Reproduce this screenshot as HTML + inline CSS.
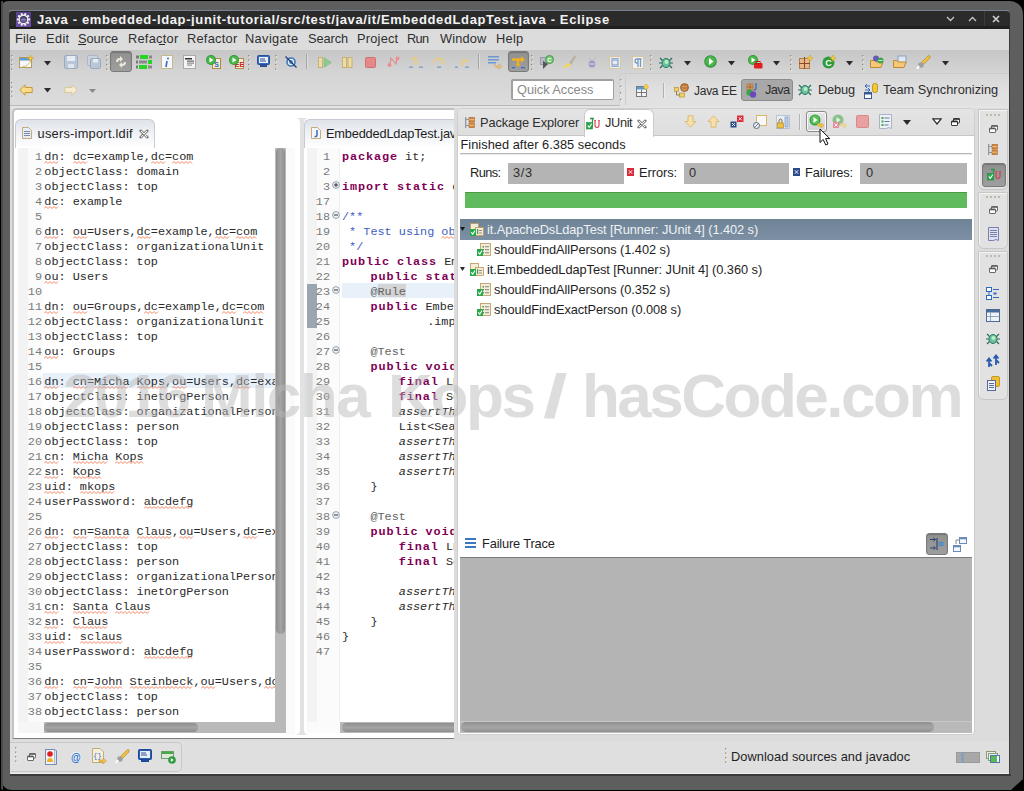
<!DOCTYPE html>
<html><head><meta charset="utf-8"><title>Eclipse</title>
<style>html,body{margin:0;padding:0;}
body{width:1024px;height:791px;overflow:hidden;position:relative;background:#000;font-family:"Liberation Sans",sans-serif;}
div,svg{position:absolute;box-sizing:border-box;}
.t{white-space:pre;}
.code{font-family:'Liberation Mono',monospace;font-size:11.83px;line-height:11.83px;}
</style></head>
<body>
<div style="left:1px;top:1px;width:1022px;height:789px;clip-path:polygon(0 0,100% 0,100% 778px,1010px 100%,0 100%);"><div style="left:0;top:0;width:1022px;height:789px;background:#5e5e5e;border-radius:7px 13px 0 11px;"></div></div>
<div style="left:1px;top:1px;width:2px;height:789px;background:#4a4a4a;border-radius:7px 0 0 12px;"></div>
<div style="left:9px;top:10px;width:1001px;height:19px;background:#2b2b2b;border-top:1px solid #6d747a;border-radius:4px 4px 0 0;"></div>
<div style="left:10px;top:29px;width:999px;height:745px;background:#dcdcdc;"></div>
<div style="left:10px;top:774px;width:1001px;height:2px;background:#3a3a3a;"></div>
<div style="left:1009px;top:29px;width:1px;height:747px;background:#3c3c3c;"></div>
<div class="t" id="t1" style="left:37px;top:13.20px;font-family:'Liberation Sans', sans-serif;font-size:13px;line-height:13px;color:#f2f2f2;font-weight:bold;font-style:normal;letter-spacing:0.630px;">Java - embedded-ldap-junit-tutorial/src/test/java/it/EmbeddedLdapTest.java - Eclipse</div>
<div style="left:10px;top:29px;width:999px;height:21px;background:#dcdcdc;"></div>
<div class="t" id="t2" style="left:15px;top:32.86px;font-family:'Liberation Sans', sans-serif;font-size:12.8px;line-height:12.8px;color:#2e2e2e;font-weight:normal;font-style:normal;letter-spacing:0.177px;">File</div>
<div class="t" id="t3" style="left:46px;top:32.86px;font-family:'Liberation Sans', sans-serif;font-size:12.8px;line-height:12.8px;color:#2e2e2e;font-weight:normal;font-style:normal;letter-spacing:0.367px;">Edit</div>
<div class="t" id="t4" style="left:78px;top:32.86px;font-family:'Liberation Sans', sans-serif;font-size:12.8px;line-height:12.8px;color:#2e2e2e;font-weight:normal;font-style:normal;letter-spacing:-0.079px;">Source</div>
<div class="t" id="t5" style="left:128px;top:32.86px;font-family:'Liberation Sans', sans-serif;font-size:12.8px;line-height:12.8px;color:#2e2e2e;font-weight:normal;font-style:normal;letter-spacing:0.256px;">Refactor</div>
<div class="t" id="t6" style="left:187px;top:32.86px;font-family:'Liberation Sans', sans-serif;font-size:12.8px;line-height:12.8px;color:#2e2e2e;font-weight:normal;font-style:normal;letter-spacing:0.256px;">Refactor</div>
<div class="t" id="t7" style="left:245px;top:32.86px;font-family:'Liberation Sans', sans-serif;font-size:12.8px;line-height:12.8px;color:#2e2e2e;font-weight:normal;font-style:normal;letter-spacing:0.378px;">Navigate</div>
<div class="t" id="t8" style="left:308px;top:32.86px;font-family:'Liberation Sans', sans-serif;font-size:12.8px;line-height:12.8px;color:#2e2e2e;font-weight:normal;font-style:normal;letter-spacing:-0.079px;">Search</div>
<div class="t" id="t9" style="left:357px;top:32.86px;font-family:'Liberation Sans', sans-serif;font-size:12.8px;line-height:12.8px;color:#2e2e2e;font-weight:normal;font-style:normal;letter-spacing:0.221px;">Project</div>
<div class="t" id="t10" style="left:407px;top:32.86px;font-family:'Liberation Sans', sans-serif;font-size:12.8px;line-height:12.8px;color:#2e2e2e;font-weight:normal;font-style:normal;letter-spacing:-0.662px;">Run</div>
<div class="t" id="t11" style="left:440px;top:32.86px;font-family:'Liberation Sans', sans-serif;font-size:12.8px;line-height:12.8px;color:#2e2e2e;font-weight:normal;font-style:normal;letter-spacing:0.128px;">Window</div>
<div class="t" id="t12" style="left:496px;top:32.86px;font-family:'Liberation Sans', sans-serif;font-size:12.8px;line-height:12.8px;color:#2e2e2e;font-weight:normal;font-style:normal;letter-spacing:0.278px;">Help</div>
<div style="left:10px;top:50px;width:999px;height:55px;background:linear-gradient(#c6c6c6,#d4d4d4 40%,#dcdcdc);"></div>
<div style="left:10px;top:105px;width:609px;height:1px;background:#b9b9b9;"></div>
<div style="left:10px;top:106px;width:999px;height:3px;background:linear-gradient(#e2e2e2,#e6e6e6 60%,#d4d4d4);"></div>
<div style="left:511px;top:79px;width:103px;height:21px;background:#fff;border:1px solid #a0a0a0;border-left-width:2px;border-top-width:2px;border-radius:2px;"></div>
<div class="t" id="t13" style="left:517px;top:83.86px;font-family:'Liberation Sans', sans-serif;font-size:12.8px;line-height:12.8px;color:#8a8a8a;font-weight:normal;font-style:normal;letter-spacing:-0.033px;">Quick Access</div>
<div style="left:619px;top:73px;width:390px;height:33px;background:linear-gradient(#d6d6d6,#e0e0e0 50%,#e2e2e2);border-left:1px solid #d0d0d0;border-top:1px solid #cccccc;border-radius:5px 0 0 0;"></div>
<div style="left:625px;top:76px;width:1px;height:29px;background:#cdcdcd;"></div>
<div style="left:741px;top:79px;width:52px;height:22px;background:#a8a8a8;border:1px solid #8c8c8c;border-radius:3px;"></div>
<div class="t" id="t14" style="left:694px;top:84.54px;font-family:'Liberation Sans', sans-serif;font-size:12px;line-height:12px;color:#2e2e2e;font-weight:normal;font-style:normal;letter-spacing:-0.268px;">Java EE</div>
<div class="t" id="t15" style="left:765px;top:83.86px;font-family:'Liberation Sans', sans-serif;font-size:12.8px;line-height:12.8px;color:#2e2e2e;font-weight:normal;font-style:normal;letter-spacing:-0.626px;">Java</div>
<div class="t" id="t16" style="left:818px;top:83.86px;font-family:'Liberation Sans', sans-serif;font-size:12.8px;line-height:12.8px;color:#2e2e2e;font-weight:normal;font-style:normal;letter-spacing:-0.139px;">Debug</div>
<div class="t" id="t17" style="left:883px;top:83.86px;font-family:'Liberation Sans', sans-serif;font-size:12.8px;line-height:12.8px;color:#2e2e2e;font-weight:normal;font-style:normal;letter-spacing:-0.004px;">Team Synchronizing</div>
<div style="left:10px;top:108px;width:999px;height:633px;background:#dcdcdc;"></div>
<div style="left:12px;top:108px;width:443px;height:631px;background:#fff;border:2px solid #c2c2c2;border-right:none;border-bottom:1px solid #7e7e7e;border-radius:5px 0 0 0;"></div>
<div style="left:14px;top:737px;width:441px;height:1px;background:#fff;"></div>
<div style="left:10px;top:739px;width:446px;height:3px;background:#dcdcdc;"></div>
<svg style="position:absolute;left:294px;top:118px;" width="16" height="620" viewBox="0 0 16 620"><path d="M2 0 Q6 0 6 6 L6 612 Q6 616 2 617 L14 617 Q10 616 10 612 L10 6 Q10 0 14 0 Z" fill="#e2e2e2"/></svg>
<div style="left:286px;top:148px;width:9px;height:587px;background:#fafafa;"></div>
<div style="left:454px;top:108px;width:4px;height:633px;background:#dcdcdc;"></div>
<div style="left:457px;top:108px;width:518px;height:627px;background:#fff;border:1px solid #cdcdcd;border-radius:6px 6px 4px 4px;"></div>
<div style="left:458px;top:109px;width:516px;height:27px;background:linear-gradient(#e4e4e4,#dedede);border-radius:5px 5px 0 0;border-bottom:1px solid #c6c6c6;"></div>
<div style="left:584px;top:109px;width:70px;height:28px;background:#fff;border:1px solid #cacaca;border-bottom:none;border-radius:6px 6px 0 0;"></div>
<div class="t" id="t18" style="left:480px;top:116.86px;font-family:'Liberation Sans', sans-serif;font-size:12.8px;line-height:12.8px;color:#2e2e2e;font-weight:normal;font-style:normal;letter-spacing:-0.124px;">Package Explorer</div>
<div class="t" id="t19" style="left:605px;top:116.86px;font-family:'Liberation Sans', sans-serif;font-size:12.8px;line-height:12.8px;color:#2e2e2e;font-weight:normal;font-style:normal;letter-spacing:-0.376px;">JUnit</div>
<div class="t" id="t20" style="left:460.5px;top:138.86px;font-family:'Liberation Sans', sans-serif;font-size:12.8px;line-height:12.8px;color:#1e1e1e;font-weight:normal;font-style:normal;letter-spacing:0.030px;">Finished after 6.385 seconds</div>
<div style="left:460px;top:153px;width:512px;height:1px;background:#b4b4b4;"></div>
<div style="left:460px;top:154px;width:512px;height:1px;background:#ececec;"></div>
<div class="t" id="t21" style="left:470px;top:166.86px;font-family:'Liberation Sans', sans-serif;font-size:12.8px;line-height:12.8px;color:#1e1e1e;font-weight:normal;font-style:normal;letter-spacing:-0.569px;">Runs:</div>
<div style="left:508px;top:163px;width:116px;height:21px;background:#b4b4b4;"></div>
<div class="t" id="t22" style="left:513px;top:166.86px;font-family:'Liberation Sans', sans-serif;font-size:12.8px;line-height:12.8px;color:#2e2e2e;font-weight:normal;font-style:normal;letter-spacing:0.681px;">3/3</div>
<div class="t" id="t23" style="left:639px;top:166.86px;font-family:'Liberation Sans', sans-serif;font-size:12.8px;line-height:12.8px;color:#1e1e1e;font-weight:normal;font-style:normal;letter-spacing:-0.040px;">Errors:</div>
<div style="left:684px;top:163px;width:105px;height:21px;background:#b4b4b4;"></div>
<div class="t" id="t24" style="left:689px;top:166.86px;font-family:'Liberation Sans', sans-serif;font-size:12.8px;line-height:12.8px;color:#2e2e2e;font-weight:normal;font-style:normal;">0</div>
<div class="t" id="t25" style="left:805px;top:166.86px;font-family:'Liberation Sans', sans-serif;font-size:12.8px;line-height:12.8px;color:#1e1e1e;font-weight:normal;font-style:normal;letter-spacing:-0.115px;">Failures:</div>
<div style="left:860px;top:163px;width:107px;height:21px;background:#b4b4b4;"></div>
<div class="t" id="t26" style="left:866px;top:166.86px;font-family:'Liberation Sans', sans-serif;font-size:12.8px;line-height:12.8px;color:#2e2e2e;font-weight:normal;font-style:normal;">0</div>
<div style="left:465px;top:192px;width:502px;height:16px;background:#5fbb5d;border-top:1px solid #4a9a48;"></div>
<div style="left:460px;top:219px;width:512px;height:21px;background:linear-gradient(#6f8396,#7d90a3);"></div>
<div class="t" id="t27" style="left:487px;top:223.86px;font-family:'Liberation Sans', sans-serif;font-size:12.8px;line-height:12.8px;color:#eef2f6;font-weight:normal;font-style:normal;letter-spacing:-0.074px;">it.ApacheDsLdapTest [Runner: JUnit 4] (1.402 s)</div>
<div class="t" id="t28" style="left:494px;top:243.86px;font-family:'Liberation Sans', sans-serif;font-size:12.8px;line-height:12.8px;color:#1e1e1e;font-weight:normal;font-style:normal;letter-spacing:-0.058px;">shouldFindAllPersons (1.402 s)</div>
<div class="t" id="t29" style="left:487px;top:263.86px;font-family:'Liberation Sans', sans-serif;font-size:12.8px;line-height:12.8px;color:#1e1e1e;font-weight:normal;font-style:normal;letter-spacing:-0.049px;">it.EmbeddedLdapTest [Runner: JUnit 4] (0.360 s)</div>
<div class="t" id="t30" style="left:494px;top:283.86px;font-family:'Liberation Sans', sans-serif;font-size:12.8px;line-height:12.8px;color:#1e1e1e;font-weight:normal;font-style:normal;letter-spacing:-0.058px;">shouldFindAllPersons (0.352 s)</div>
<div class="t" id="t31" style="left:494px;top:303.86px;font-family:'Liberation Sans', sans-serif;font-size:12.8px;line-height:12.8px;color:#1e1e1e;font-weight:normal;font-style:normal;letter-spacing:-0.069px;">shouldFindExactPerson (0.008 s)</div>
<div class="t" id="t32" style="left:482px;top:537.86px;font-family:'Liberation Sans', sans-serif;font-size:12.8px;line-height:12.8px;color:#1e1e1e;font-weight:normal;font-style:normal;letter-spacing:-0.146px;">Failure Trace</div>
<div style="left:460px;top:557px;width:512px;height:176px;background:#b4b4b4;border-top:1px solid #7a7a7a;"></div>
<div style="left:978px;top:109px;width:30px;height:81px;background:#e2e2e2;border:1px solid #c6c6c6;border-radius:1px 1px 6px 6px;box-shadow:inset 1px 1px 0 #f4f4f4;"></div>
<div style="left:978px;top:192px;width:30px;height:57px;background:#e2e2e2;border:1px solid #c6c6c6;border-radius:1px 1px 6px 6px;box-shadow:inset 1px 1px 0 #f4f4f4;"></div>
<div style="left:978px;top:251px;width:30px;height:149px;background:#e2e2e2;border:1px solid #c6c6c6;border-radius:1px 1px 6px 6px;box-shadow:inset 1px 1px 0 #f4f4f4;"></div>
<div style="left:10px;top:741px;width:999px;height:32px;background:#dfdfdf;"></div>
<div style="left:10px;top:773px;width:999px;height:1px;background:#efefef;"></div>
<div style="left:10px;top:742px;width:172px;height:30px;background:#e0e0e0;border:1px solid #c8c8c8;border-left:none;border-radius:0 5px 5px 0;"></div>
<div class="t" id="t33" style="left:731px;top:750.86px;font-family:'Liberation Sans', sans-serif;font-size:12.8px;line-height:12.8px;color:#1e1e1e;font-weight:normal;font-style:normal;letter-spacing:0.048px;">Download sources and javadoc</div>
<div style="left:15px;top:119px;width:140px;height:29px;background:linear-gradient(#dfe3ea,#f4f5f8 60%,#fff);border:1px solid #c6cbd3;border-bottom:none;border-radius:6px 6px 0 0;"></div>
<div class="t" id="t34" style="left:37.5px;top:127.86px;font-family:'Liberation Sans', sans-serif;font-size:12.8px;line-height:12.8px;color:#1e1e1e;font-weight:normal;font-style:normal;letter-spacing:0.258px;">users-import.ldif</div>
<div style="left:18px;top:148px;width:10px;height:574px;background:#f3f3f3;"></div>
<div style="left:28px;top:148px;width:15px;height:574px;background:#fbfbfb;"></div>
<div style="left:43px;top:148px;width:232px;height:575px;overflow:hidden;">
<div style="left:0px;top:225px;width:232px;height:15px;background:#e8f0fa;"></div>
<div class="t code" style="left:1.35px;top:3.84px;"><span style="color:#2a2a2a;">dn: dc=example,dc=com</span></div>
<svg style="position:absolute;left:1.35px;top:12.5px;" width="15" height="4" viewBox="0 0 15 4"><path d="M0 2.5 l2 -2 l2 2 l2 -2 l2 2 l2 -2 l2 2 l2 -2" fill="none" stroke="#f4683c" stroke-width="0.8"/></svg>
<svg style="position:absolute;left:29.75px;top:12.5px;" width="15" height="4" viewBox="0 0 15 4"><path d="M0 2.5 l2 -2 l2 2 l2 -2 l2 2 l2 -2 l2 2 l2 -2" fill="none" stroke="#f4683c" stroke-width="0.8"/></svg>
<svg style="position:absolute;left:107.85px;top:12.5px;" width="15" height="4" viewBox="0 0 15 4"><path d="M0 2.5 l2 -2 l2 2 l2 -2 l2 2 l2 -2 l2 2 l2 -2" fill="none" stroke="#f4683c" stroke-width="0.8"/></svg>
<svg style="position:absolute;left:129.15px;top:12.5px;" width="21" height="4" viewBox="0 0 21 4"><path d="M0 2.5 l2 -2 l2 2 l2 -2 l2 2 l2 -2 l2 2 l2 -2 l2 2 l2 -2 l2 2" fill="none" stroke="#f4683c" stroke-width="0.8"/></svg>
<div class="t code" style="left:1.35px;top:18.84px;"><span style="color:#2a2a2a;">objectClass: domain</span></div>
<div class="t code" style="left:1.35px;top:33.84px;"><span style="color:#2a2a2a;">objectClass: top</span></div>
<div class="t code" style="left:1.35px;top:48.84px;"><span style="color:#2a2a2a;">dc: example</span></div>
<svg style="position:absolute;left:1.35px;top:57.5px;" width="15" height="4" viewBox="0 0 15 4"><path d="M0 2.5 l2 -2 l2 2 l2 -2 l2 2 l2 -2 l2 2 l2 -2" fill="none" stroke="#f4683c" stroke-width="0.8"/></svg>
<div class="t code" style="left:1.35px;top:63.84px;"><span style="color:#2a2a2a;"></span></div>
<div class="t code" style="left:1.35px;top:78.84px;"><span style="color:#2a2a2a;">dn: ou=Users,dc=example,dc=com</span></div>
<svg style="position:absolute;left:1.35px;top:87.5px;" width="15" height="4" viewBox="0 0 15 4"><path d="M0 2.5 l2 -2 l2 2 l2 -2 l2 2 l2 -2 l2 2 l2 -2" fill="none" stroke="#f4683c" stroke-width="0.8"/></svg>
<svg style="position:absolute;left:29.75px;top:87.5px;" width="15" height="4" viewBox="0 0 15 4"><path d="M0 2.5 l2 -2 l2 2 l2 -2 l2 2 l2 -2 l2 2 l2 -2" fill="none" stroke="#f4683c" stroke-width="0.8"/></svg>
<svg style="position:absolute;left:93.64999999999999px;top:87.5px;" width="15" height="4" viewBox="0 0 15 4"><path d="M0 2.5 l2 -2 l2 2 l2 -2 l2 2 l2 -2 l2 2 l2 -2" fill="none" stroke="#f4683c" stroke-width="0.8"/></svg>
<svg style="position:absolute;left:171.74999999999997px;top:87.5px;" width="15" height="4" viewBox="0 0 15 4"><path d="M0 2.5 l2 -2 l2 2 l2 -2 l2 2 l2 -2 l2 2 l2 -2" fill="none" stroke="#f4683c" stroke-width="0.8"/></svg>
<svg style="position:absolute;left:193.04999999999998px;top:87.5px;" width="21" height="4" viewBox="0 0 21 4"><path d="M0 2.5 l2 -2 l2 2 l2 -2 l2 2 l2 -2 l2 2 l2 -2 l2 2 l2 -2 l2 2" fill="none" stroke="#f4683c" stroke-width="0.8"/></svg>
<div class="t code" style="left:1.35px;top:93.84px;"><span style="color:#2a2a2a;">objectClass: organizationalUnit</span></div>
<div class="t code" style="left:1.35px;top:108.84px;"><span style="color:#2a2a2a;">objectClass: top</span></div>
<div class="t code" style="left:1.35px;top:123.84px;"><span style="color:#2a2a2a;">ou: Users</span></div>
<svg style="position:absolute;left:1.35px;top:132.5px;" width="15" height="4" viewBox="0 0 15 4"><path d="M0 2.5 l2 -2 l2 2 l2 -2 l2 2 l2 -2 l2 2 l2 -2" fill="none" stroke="#f4683c" stroke-width="0.8"/></svg>
<div class="t code" style="left:1.35px;top:138.84px;"><span style="color:#2a2a2a;"></span></div>
<div class="t code" style="left:1.35px;top:153.84px;"><span style="color:#2a2a2a;">dn: ou=Groups,dc=example,dc=com</span></div>
<svg style="position:absolute;left:1.35px;top:162.5px;" width="15" height="4" viewBox="0 0 15 4"><path d="M0 2.5 l2 -2 l2 2 l2 -2 l2 2 l2 -2 l2 2 l2 -2" fill="none" stroke="#f4683c" stroke-width="0.8"/></svg>
<svg style="position:absolute;left:29.75px;top:162.5px;" width="15" height="4" viewBox="0 0 15 4"><path d="M0 2.5 l2 -2 l2 2 l2 -2 l2 2 l2 -2 l2 2 l2 -2" fill="none" stroke="#f4683c" stroke-width="0.8"/></svg>
<svg style="position:absolute;left:100.74999999999999px;top:162.5px;" width="15" height="4" viewBox="0 0 15 4"><path d="M0 2.5 l2 -2 l2 2 l2 -2 l2 2 l2 -2 l2 2 l2 -2" fill="none" stroke="#f4683c" stroke-width="0.8"/></svg>
<svg style="position:absolute;left:178.85px;top:162.5px;" width="15" height="4" viewBox="0 0 15 4"><path d="M0 2.5 l2 -2 l2 2 l2 -2 l2 2 l2 -2 l2 2 l2 -2" fill="none" stroke="#f4683c" stroke-width="0.8"/></svg>
<svg style="position:absolute;left:200.14999999999998px;top:162.5px;" width="21" height="4" viewBox="0 0 21 4"><path d="M0 2.5 l2 -2 l2 2 l2 -2 l2 2 l2 -2 l2 2 l2 -2 l2 2 l2 -2 l2 2" fill="none" stroke="#f4683c" stroke-width="0.8"/></svg>
<div class="t code" style="left:1.35px;top:168.84px;"><span style="color:#2a2a2a;">objectClass: organizationalUnit</span></div>
<div class="t code" style="left:1.35px;top:183.84px;"><span style="color:#2a2a2a;">objectClass: top</span></div>
<div class="t code" style="left:1.35px;top:198.84px;"><span style="color:#2a2a2a;">ou: Groups</span></div>
<svg style="position:absolute;left:1.35px;top:207.5px;" width="15" height="4" viewBox="0 0 15 4"><path d="M0 2.5 l2 -2 l2 2 l2 -2 l2 2 l2 -2 l2 2 l2 -2" fill="none" stroke="#f4683c" stroke-width="0.8"/></svg>
<div class="t code" style="left:1.35px;top:213.84px;"><span style="color:#2a2a2a;"></span></div>
<div class="t code" style="left:1.35px;top:228.84px;"><span style="color:#2a2a2a;">dn: cn=Micha Kops,ou=Users,dc=example,dc=com</span></div>
<svg style="position:absolute;left:1.35px;top:237.5px;" width="15" height="4" viewBox="0 0 15 4"><path d="M0 2.5 l2 -2 l2 2 l2 -2 l2 2 l2 -2 l2 2 l2 -2" fill="none" stroke="#f4683c" stroke-width="0.8"/></svg>
<svg style="position:absolute;left:29.75px;top:237.5px;" width="15" height="4" viewBox="0 0 15 4"><path d="M0 2.5 l2 -2 l2 2 l2 -2 l2 2 l2 -2 l2 2 l2 -2" fill="none" stroke="#f4683c" stroke-width="0.8"/></svg>
<svg style="position:absolute;left:51.05px;top:237.5px;" width="35" height="4" viewBox="0 0 35 4"><path d="M0 2.5 l2 -2 l2 2 l2 -2 l2 2 l2 -2 l2 2 l2 -2 l2 2 l2 -2 l2 2 l2 -2 l2 2 l2 -2 l2 2 l2 -2 l2 2 l2 -2" fill="none" stroke="#f4683c" stroke-width="0.8"/></svg>
<svg style="position:absolute;left:93.64999999999999px;top:237.5px;" width="29" height="4" viewBox="0 0 29 4"><path d="M0 2.5 l2 -2 l2 2 l2 -2 l2 2 l2 -2 l2 2 l2 -2 l2 2 l2 -2 l2 2 l2 -2 l2 2 l2 -2 l2 2" fill="none" stroke="#f4683c" stroke-width="0.8"/></svg>
<svg style="position:absolute;left:129.15px;top:237.5px;" width="15" height="4" viewBox="0 0 15 4"><path d="M0 2.5 l2 -2 l2 2 l2 -2 l2 2 l2 -2 l2 2 l2 -2" fill="none" stroke="#f4683c" stroke-width="0.8"/></svg>
<svg style="position:absolute;left:193.04999999999998px;top:237.5px;" width="15" height="4" viewBox="0 0 15 4"><path d="M0 2.5 l2 -2 l2 2 l2 -2 l2 2 l2 -2 l2 2 l2 -2" fill="none" stroke="#f4683c" stroke-width="0.8"/></svg>
<svg style="position:absolute;left:271.15000000000003px;top:237.5px;" width="15" height="4" viewBox="0 0 15 4"><path d="M0 2.5 l2 -2 l2 2 l2 -2 l2 2 l2 -2 l2 2 l2 -2" fill="none" stroke="#f4683c" stroke-width="0.8"/></svg>
<svg style="position:absolute;left:292.45px;top:237.5px;" width="21" height="4" viewBox="0 0 21 4"><path d="M0 2.5 l2 -2 l2 2 l2 -2 l2 2 l2 -2 l2 2 l2 -2 l2 2 l2 -2 l2 2" fill="none" stroke="#f4683c" stroke-width="0.8"/></svg>
<div class="t code" style="left:1.35px;top:243.84px;"><span style="color:#2a2a2a;">objectClass: inetOrgPerson</span></div>
<div class="t code" style="left:1.35px;top:258.84px;"><span style="color:#2a2a2a;">objectClass: organizationalPerson</span></div>
<div class="t code" style="left:1.35px;top:273.84px;"><span style="color:#2a2a2a;">objectClass: person</span></div>
<div class="t code" style="left:1.35px;top:288.84px;"><span style="color:#2a2a2a;">objectClass: top</span></div>
<div class="t code" style="left:1.35px;top:303.84px;"><span style="color:#2a2a2a;">cn: Micha Kops</span></div>
<svg style="position:absolute;left:1.35px;top:312.5px;" width="15" height="4" viewBox="0 0 15 4"><path d="M0 2.5 l2 -2 l2 2 l2 -2 l2 2 l2 -2 l2 2 l2 -2" fill="none" stroke="#f4683c" stroke-width="0.8"/></svg>
<svg style="position:absolute;left:29.75px;top:312.5px;" width="35" height="4" viewBox="0 0 35 4"><path d="M0 2.5 l2 -2 l2 2 l2 -2 l2 2 l2 -2 l2 2 l2 -2 l2 2 l2 -2 l2 2 l2 -2 l2 2 l2 -2 l2 2 l2 -2 l2 2 l2 -2" fill="none" stroke="#f4683c" stroke-width="0.8"/></svg>
<svg style="position:absolute;left:72.35px;top:312.5px;" width="29" height="4" viewBox="0 0 29 4"><path d="M0 2.5 l2 -2 l2 2 l2 -2 l2 2 l2 -2 l2 2 l2 -2 l2 2 l2 -2 l2 2 l2 -2 l2 2 l2 -2 l2 2" fill="none" stroke="#f4683c" stroke-width="0.8"/></svg>
<div class="t code" style="left:1.35px;top:318.84px;"><span style="color:#2a2a2a;">sn: Kops</span></div>
<svg style="position:absolute;left:1.35px;top:327.5px;" width="15" height="4" viewBox="0 0 15 4"><path d="M0 2.5 l2 -2 l2 2 l2 -2 l2 2 l2 -2 l2 2 l2 -2" fill="none" stroke="#f4683c" stroke-width="0.8"/></svg>
<svg style="position:absolute;left:29.75px;top:327.5px;" width="29" height="4" viewBox="0 0 29 4"><path d="M0 2.5 l2 -2 l2 2 l2 -2 l2 2 l2 -2 l2 2 l2 -2 l2 2 l2 -2 l2 2 l2 -2 l2 2 l2 -2 l2 2" fill="none" stroke="#f4683c" stroke-width="0.8"/></svg>
<div class="t code" style="left:1.35px;top:333.84px;"><span style="color:#2a2a2a;">uid: mkops</span></div>
<svg style="position:absolute;left:1.35px;top:342.5px;" width="21" height="4" viewBox="0 0 21 4"><path d="M0 2.5 l2 -2 l2 2 l2 -2 l2 2 l2 -2 l2 2 l2 -2 l2 2 l2 -2 l2 2" fill="none" stroke="#f4683c" stroke-width="0.8"/></svg>
<svg style="position:absolute;left:36.85px;top:342.5px;" width="35" height="4" viewBox="0 0 35 4"><path d="M0 2.5 l2 -2 l2 2 l2 -2 l2 2 l2 -2 l2 2 l2 -2 l2 2 l2 -2 l2 2 l2 -2 l2 2 l2 -2 l2 2 l2 -2 l2 2 l2 -2" fill="none" stroke="#f4683c" stroke-width="0.8"/></svg>
<div class="t code" style="left:1.35px;top:348.84px;"><span style="color:#2a2a2a;">userPassword: abcdefg</span></div>
<svg style="position:absolute;left:100.74999999999999px;top:357.5px;" width="49" height="4" viewBox="0 0 49 4"><path d="M0 2.5 l2 -2 l2 2 l2 -2 l2 2 l2 -2 l2 2 l2 -2 l2 2 l2 -2 l2 2 l2 -2 l2 2 l2 -2 l2 2 l2 -2 l2 2 l2 -2 l2 2 l2 -2 l2 2 l2 -2 l2 2 l2 -2 l2 2" fill="none" stroke="#f4683c" stroke-width="0.8"/></svg>
<div class="t code" style="left:1.35px;top:363.84px;"><span style="color:#2a2a2a;"></span></div>
<div class="t code" style="left:1.35px;top:378.84px;"><span style="color:#2a2a2a;">dn: cn=Santa Claus,ou=Users,dc=example,dc=com</span></div>
<svg style="position:absolute;left:1.35px;top:387.5px;" width="15" height="4" viewBox="0 0 15 4"><path d="M0 2.5 l2 -2 l2 2 l2 -2 l2 2 l2 -2 l2 2 l2 -2" fill="none" stroke="#f4683c" stroke-width="0.8"/></svg>
<svg style="position:absolute;left:29.75px;top:387.5px;" width="15" height="4" viewBox="0 0 15 4"><path d="M0 2.5 l2 -2 l2 2 l2 -2 l2 2 l2 -2 l2 2 l2 -2" fill="none" stroke="#f4683c" stroke-width="0.8"/></svg>
<svg style="position:absolute;left:51.05px;top:387.5px;" width="35" height="4" viewBox="0 0 35 4"><path d="M0 2.5 l2 -2 l2 2 l2 -2 l2 2 l2 -2 l2 2 l2 -2 l2 2 l2 -2 l2 2 l2 -2 l2 2 l2 -2 l2 2 l2 -2 l2 2 l2 -2" fill="none" stroke="#f4683c" stroke-width="0.8"/></svg>
<svg style="position:absolute;left:93.64999999999999px;top:387.5px;" width="35" height="4" viewBox="0 0 35 4"><path d="M0 2.5 l2 -2 l2 2 l2 -2 l2 2 l2 -2 l2 2 l2 -2 l2 2 l2 -2 l2 2 l2 -2 l2 2 l2 -2 l2 2 l2 -2 l2 2 l2 -2" fill="none" stroke="#f4683c" stroke-width="0.8"/></svg>
<svg style="position:absolute;left:136.25px;top:387.5px;" width="15" height="4" viewBox="0 0 15 4"><path d="M0 2.5 l2 -2 l2 2 l2 -2 l2 2 l2 -2 l2 2 l2 -2" fill="none" stroke="#f4683c" stroke-width="0.8"/></svg>
<svg style="position:absolute;left:200.14999999999998px;top:387.5px;" width="15" height="4" viewBox="0 0 15 4"><path d="M0 2.5 l2 -2 l2 2 l2 -2 l2 2 l2 -2 l2 2 l2 -2" fill="none" stroke="#f4683c" stroke-width="0.8"/></svg>
<svg style="position:absolute;left:278.25px;top:387.5px;" width="15" height="4" viewBox="0 0 15 4"><path d="M0 2.5 l2 -2 l2 2 l2 -2 l2 2 l2 -2 l2 2 l2 -2" fill="none" stroke="#f4683c" stroke-width="0.8"/></svg>
<svg style="position:absolute;left:299.55px;top:387.5px;" width="21" height="4" viewBox="0 0 21 4"><path d="M0 2.5 l2 -2 l2 2 l2 -2 l2 2 l2 -2 l2 2 l2 -2 l2 2 l2 -2 l2 2" fill="none" stroke="#f4683c" stroke-width="0.8"/></svg>
<div class="t code" style="left:1.35px;top:393.84px;"><span style="color:#2a2a2a;">objectClass: top</span></div>
<div class="t code" style="left:1.35px;top:408.84px;"><span style="color:#2a2a2a;">objectClass: person</span></div>
<div class="t code" style="left:1.35px;top:423.84px;"><span style="color:#2a2a2a;">objectClass: organizationalPerson</span></div>
<div class="t code" style="left:1.35px;top:438.84px;"><span style="color:#2a2a2a;">objectClass: inetOrgPerson</span></div>
<div class="t code" style="left:1.35px;top:453.84px;"><span style="color:#2a2a2a;">cn: Santa Claus</span></div>
<svg style="position:absolute;left:1.35px;top:462.5px;" width="15" height="4" viewBox="0 0 15 4"><path d="M0 2.5 l2 -2 l2 2 l2 -2 l2 2 l2 -2 l2 2 l2 -2" fill="none" stroke="#f4683c" stroke-width="0.8"/></svg>
<svg style="position:absolute;left:29.75px;top:462.5px;" width="35" height="4" viewBox="0 0 35 4"><path d="M0 2.5 l2 -2 l2 2 l2 -2 l2 2 l2 -2 l2 2 l2 -2 l2 2 l2 -2 l2 2 l2 -2 l2 2 l2 -2 l2 2 l2 -2 l2 2 l2 -2" fill="none" stroke="#f4683c" stroke-width="0.8"/></svg>
<svg style="position:absolute;left:72.35px;top:462.5px;" width="35" height="4" viewBox="0 0 35 4"><path d="M0 2.5 l2 -2 l2 2 l2 -2 l2 2 l2 -2 l2 2 l2 -2 l2 2 l2 -2 l2 2 l2 -2 l2 2 l2 -2 l2 2 l2 -2 l2 2 l2 -2" fill="none" stroke="#f4683c" stroke-width="0.8"/></svg>
<div class="t code" style="left:1.35px;top:468.84px;"><span style="color:#2a2a2a;">sn: Claus</span></div>
<svg style="position:absolute;left:1.35px;top:477.5px;" width="15" height="4" viewBox="0 0 15 4"><path d="M0 2.5 l2 -2 l2 2 l2 -2 l2 2 l2 -2 l2 2 l2 -2" fill="none" stroke="#f4683c" stroke-width="0.8"/></svg>
<svg style="position:absolute;left:29.75px;top:477.5px;" width="35" height="4" viewBox="0 0 35 4"><path d="M0 2.5 l2 -2 l2 2 l2 -2 l2 2 l2 -2 l2 2 l2 -2 l2 2 l2 -2 l2 2 l2 -2 l2 2 l2 -2 l2 2 l2 -2 l2 2 l2 -2" fill="none" stroke="#f4683c" stroke-width="0.8"/></svg>
<div class="t code" style="left:1.35px;top:483.84px;"><span style="color:#2a2a2a;">uid: sclaus</span></div>
<svg style="position:absolute;left:1.35px;top:492.5px;" width="21" height="4" viewBox="0 0 21 4"><path d="M0 2.5 l2 -2 l2 2 l2 -2 l2 2 l2 -2 l2 2 l2 -2 l2 2 l2 -2 l2 2" fill="none" stroke="#f4683c" stroke-width="0.8"/></svg>
<svg style="position:absolute;left:36.85px;top:492.5px;" width="43" height="4" viewBox="0 0 43 4"><path d="M0 2.5 l2 -2 l2 2 l2 -2 l2 2 l2 -2 l2 2 l2 -2 l2 2 l2 -2 l2 2 l2 -2 l2 2 l2 -2 l2 2 l2 -2 l2 2 l2 -2 l2 2 l2 -2 l2 2 l2 -2" fill="none" stroke="#f4683c" stroke-width="0.8"/></svg>
<div class="t code" style="left:1.35px;top:498.84px;"><span style="color:#2a2a2a;">userPassword: abcdefg</span></div>
<svg style="position:absolute;left:100.74999999999999px;top:507.5px;" width="49" height="4" viewBox="0 0 49 4"><path d="M0 2.5 l2 -2 l2 2 l2 -2 l2 2 l2 -2 l2 2 l2 -2 l2 2 l2 -2 l2 2 l2 -2 l2 2 l2 -2 l2 2 l2 -2 l2 2 l2 -2 l2 2 l2 -2 l2 2 l2 -2 l2 2 l2 -2 l2 2" fill="none" stroke="#f4683c" stroke-width="0.8"/></svg>
<div class="t code" style="left:1.35px;top:513.84px;"><span style="color:#2a2a2a;"></span></div>
<div class="t code" style="left:1.35px;top:528.84px;"><span style="color:#2a2a2a;">dn: cn=John Steinbeck,ou=Users,dc=example,dc=com</span></div>
<svg style="position:absolute;left:1.35px;top:537.5px;" width="15" height="4" viewBox="0 0 15 4"><path d="M0 2.5 l2 -2 l2 2 l2 -2 l2 2 l2 -2 l2 2 l2 -2" fill="none" stroke="#f4683c" stroke-width="0.8"/></svg>
<svg style="position:absolute;left:29.75px;top:537.5px;" width="15" height="4" viewBox="0 0 15 4"><path d="M0 2.5 l2 -2 l2 2 l2 -2 l2 2 l2 -2 l2 2 l2 -2" fill="none" stroke="#f4683c" stroke-width="0.8"/></svg>
<svg style="position:absolute;left:51.05px;top:537.5px;" width="29" height="4" viewBox="0 0 29 4"><path d="M0 2.5 l2 -2 l2 2 l2 -2 l2 2 l2 -2 l2 2 l2 -2 l2 2 l2 -2 l2 2 l2 -2 l2 2 l2 -2 l2 2" fill="none" stroke="#f4683c" stroke-width="0.8"/></svg>
<svg style="position:absolute;left:86.54999999999998px;top:537.5px;" width="63" height="4" viewBox="0 0 63 4"><path d="M0 2.5 l2 -2 l2 2 l2 -2 l2 2 l2 -2 l2 2 l2 -2 l2 2 l2 -2 l2 2 l2 -2 l2 2 l2 -2 l2 2 l2 -2 l2 2 l2 -2 l2 2 l2 -2 l2 2 l2 -2 l2 2 l2 -2 l2 2 l2 -2 l2 2 l2 -2 l2 2 l2 -2 l2 2 l2 -2" fill="none" stroke="#f4683c" stroke-width="0.8"/></svg>
<svg style="position:absolute;left:157.54999999999998px;top:537.5px;" width="15" height="4" viewBox="0 0 15 4"><path d="M0 2.5 l2 -2 l2 2 l2 -2 l2 2 l2 -2 l2 2 l2 -2" fill="none" stroke="#f4683c" stroke-width="0.8"/></svg>
<svg style="position:absolute;left:221.45px;top:537.5px;" width="15" height="4" viewBox="0 0 15 4"><path d="M0 2.5 l2 -2 l2 2 l2 -2 l2 2 l2 -2 l2 2 l2 -2" fill="none" stroke="#f4683c" stroke-width="0.8"/></svg>
<svg style="position:absolute;left:299.55px;top:537.5px;" width="15" height="4" viewBox="0 0 15 4"><path d="M0 2.5 l2 -2 l2 2 l2 -2 l2 2 l2 -2 l2 2 l2 -2" fill="none" stroke="#f4683c" stroke-width="0.8"/></svg>
<svg style="position:absolute;left:320.85px;top:537.5px;" width="21" height="4" viewBox="0 0 21 4"><path d="M0 2.5 l2 -2 l2 2 l2 -2 l2 2 l2 -2 l2 2 l2 -2 l2 2 l2 -2 l2 2" fill="none" stroke="#f4683c" stroke-width="0.8"/></svg>
<div class="t code" style="left:1.35px;top:543.84px;"><span style="color:#2a2a2a;">objectClass: top</span></div>
<div class="t code" style="left:1.35px;top:558.84px;"><span style="color:#2a2a2a;">objectClass: person</span></div>
<div class="t code" style="left:1.35px;top:573.84px;"><span style="color:#2a2a2a;">objectClass: organizationalPerson</span></div>
</div>
<div class="t code" style="left:34.9px;top:151.84px;"><span style="color:#7a7a7a;">1</span></div>
<div class="t code" style="left:34.9px;top:166.84px;"><span style="color:#7a7a7a;">2</span></div>
<div class="t code" style="left:34.9px;top:181.84px;"><span style="color:#7a7a7a;">3</span></div>
<div class="t code" style="left:34.9px;top:196.84px;"><span style="color:#7a7a7a;">4</span></div>
<div class="t code" style="left:34.9px;top:211.84px;"><span style="color:#7a7a7a;">5</span></div>
<div class="t code" style="left:34.9px;top:226.84px;"><span style="color:#7a7a7a;">6</span></div>
<div class="t code" style="left:34.9px;top:241.84px;"><span style="color:#7a7a7a;">7</span></div>
<div class="t code" style="left:34.9px;top:256.84px;"><span style="color:#7a7a7a;">8</span></div>
<div class="t code" style="left:34.9px;top:271.84px;"><span style="color:#7a7a7a;">9</span></div>
<div class="t code" style="left:27.8px;top:286.84px;"><span style="color:#7a7a7a;">10</span></div>
<div class="t code" style="left:27.8px;top:301.84px;"><span style="color:#7a7a7a;">11</span></div>
<div class="t code" style="left:27.8px;top:316.84px;"><span style="color:#7a7a7a;">12</span></div>
<div class="t code" style="left:27.8px;top:331.84px;"><span style="color:#7a7a7a;">13</span></div>
<div class="t code" style="left:27.8px;top:346.84px;"><span style="color:#7a7a7a;">14</span></div>
<div class="t code" style="left:27.8px;top:361.84px;"><span style="color:#7a7a7a;">15</span></div>
<div class="t code" style="left:27.8px;top:376.84px;"><span style="color:#7a7a7a;">16</span></div>
<div class="t code" style="left:27.8px;top:391.84px;"><span style="color:#7a7a7a;">17</span></div>
<div class="t code" style="left:27.8px;top:406.84px;"><span style="color:#7a7a7a;">18</span></div>
<div class="t code" style="left:27.8px;top:421.84px;"><span style="color:#7a7a7a;">19</span></div>
<div class="t code" style="left:27.8px;top:436.84px;"><span style="color:#7a7a7a;">20</span></div>
<div class="t code" style="left:27.8px;top:451.84px;"><span style="color:#7a7a7a;">21</span></div>
<div class="t code" style="left:27.8px;top:466.84px;"><span style="color:#7a7a7a;">22</span></div>
<div class="t code" style="left:27.8px;top:481.84px;"><span style="color:#7a7a7a;">23</span></div>
<div class="t code" style="left:27.8px;top:496.84px;"><span style="color:#7a7a7a;">24</span></div>
<div class="t code" style="left:27.8px;top:511.84px;"><span style="color:#7a7a7a;">25</span></div>
<div class="t code" style="left:27.8px;top:526.84px;"><span style="color:#7a7a7a;">26</span></div>
<div class="t code" style="left:27.8px;top:541.84px;"><span style="color:#7a7a7a;">27</span></div>
<div class="t code" style="left:27.8px;top:556.84px;"><span style="color:#7a7a7a;">28</span></div>
<div class="t code" style="left:27.8px;top:571.84px;"><span style="color:#7a7a7a;">29</span></div>
<div class="t code" style="left:27.8px;top:586.84px;"><span style="color:#7a7a7a;">30</span></div>
<div class="t code" style="left:27.8px;top:601.84px;"><span style="color:#7a7a7a;">31</span></div>
<div class="t code" style="left:27.8px;top:616.84px;"><span style="color:#7a7a7a;">32</span></div>
<div class="t code" style="left:27.8px;top:631.84px;"><span style="color:#7a7a7a;">33</span></div>
<div class="t code" style="left:27.8px;top:646.84px;"><span style="color:#7a7a7a;">34</span></div>
<div class="t code" style="left:27.8px;top:661.84px;"><span style="color:#7a7a7a;">35</span></div>
<div class="t code" style="left:27.8px;top:676.84px;"><span style="color:#7a7a7a;">36</span></div>
<div class="t code" style="left:27.8px;top:691.84px;"><span style="color:#7a7a7a;">37</span></div>
<div class="t code" style="left:27.8px;top:706.84px;"><span style="color:#7a7a7a;">38</span></div>
<div style="left:275px;top:148px;width:11px;height:574px;background:#b9b9b9;"></div>
<div style="left:276px;top:148px;width:9px;height:486px;background:linear-gradient(90deg,#8e8e8e,#a4a4a4 50%,#8e8e8e);border-radius:5px;"></div>
<div style="left:44px;top:722px;width:242px;height:11px;background:#b9b9b9;"></div>
<div style="left:18px;top:722px;width:26px;height:11px;background:#f6f6f6;"></div>
<div style="left:44px;top:723px;width:154px;height:9px;background:linear-gradient(#8e8e8e,#a4a4a4 50%,#8e8e8e);border-radius:5px;"></div>
<div style="left:304px;top:119px;width:150px;height:29px;background:linear-gradient(#dfe3ea,#f4f5f8 60%,#fff);border:1px solid #c6cbd3;border-bottom:none;border-right:none;border-radius:6px 0 0 0;"></div>
<div style="left:326px;top:120px;width:128px;height:27px;overflow:hidden;">
<div class="t" id="t35" style="left:0px;top:7.86px;font-family:'Liberation Sans', sans-serif;font-size:12.8px;line-height:12.8px;color:#1e1e1e;font-weight:normal;font-style:normal;letter-spacing:-0.186px;">EmbeddedLdapTest.java</div>
</div>
<div style="left:307px;top:148px;width:10px;height:574px;background:#f3f3f3;"></div>
<div style="left:317px;top:148px;width:22px;height:574px;background:#fbfbfb;"></div>
<div style="left:339px;top:148px;width:1px;height:574px;background:#f0f0f0;"></div>
<div style="left:307px;top:284px;width:10px;height:44px;background:#9ca6b0;"></div>
<div style="left:340px;top:148px;width:114px;height:574px;overflow:hidden;">
<div style="left:2px;top:135px;width:112px;height:15px;background:#e8f0fa;"></div>
<div style="left:37.5px;top:136px;width:28.4px;height:13px;background:#d4d4d4;"></div>
<div class="t code" style="left:2px;top:3.84px;"><span style="color:#7f0055;font-weight:bold;letter-spacing:0.9px;">package</span><span style="color:#2a2a2a;"> it;</span></div>
<div class="t code" style="left:2px;top:33.84px;"><span style="color:#7f0055;font-weight:bold;letter-spacing:0.9px;">import</span><span style="color:#2a2a2a;"> </span><span style="color:#7f0055;font-weight:bold;letter-spacing:0.9px;">static</span><span style="color:#2a2a2a;"> org.</span></div>
<div class="t code" style="left:2px;top:63.84px;"><span style="color:#3f5fbf;">/**</span></div>
<div class="t code" style="left:2px;top:78.84px;"><span style="color:#3f5fbf;"> * Test using objects</span></div>
<div class="t code" style="left:2px;top:93.84px;"><span style="color:#3f5fbf;"> */</span></div>
<div class="t code" style="left:2px;top:108.84px;"><span style="color:#7f0055;font-weight:bold;letter-spacing:0.9px;">public</span><span style="color:#2a2a2a;"> </span><span style="color:#7f0055;font-weight:bold;letter-spacing:0.9px;">class</span><span style="color:#2a2a2a;"> EmbeddedLdapTest</span></div>
<div class="t code" style="left:2px;top:123.84px;"><span style="color:#2a2a2a;">    </span><span style="color:#7f0055;font-weight:bold;letter-spacing:0.9px;">public</span><span style="color:#2a2a2a;"> </span><span style="color:#7f0055;font-weight:bold;letter-spacing:0.9px;">static</span><span style="color:#2a2a2a;"> final</span></div>
<div class="t code" style="left:2px;top:138.84px;"><span style="color:#2a2a2a;">    </span><span style="color:#646464;">@Rule</span></div>
<div class="t code" style="left:2px;top:153.84px;"><span style="color:#2a2a2a;">    </span><span style="color:#7f0055;font-weight:bold;letter-spacing:0.9px;">public</span><span style="color:#2a2a2a;"> EmbeddedLdapRule</span></div>
<div class="t code" style="left:2px;top:168.84px;"><span style="color:#2a2a2a;">            .importing</span></div>
<div class="t code" style="left:2px;top:198.84px;"><span style="color:#2a2a2a;">    </span><span style="color:#646464;">@Test</span></div>
<div class="t code" style="left:2px;top:213.84px;"><span style="color:#2a2a2a;">    </span><span style="color:#7f0055;font-weight:bold;letter-spacing:0.9px;">public</span><span style="color:#2a2a2a;"> </span><span style="color:#7f0055;font-weight:bold;letter-spacing:0.9px;">void</span><span style="color:#2a2a2a;"> shouldFind</span></div>
<div class="t code" style="left:2px;top:228.84px;"><span style="color:#2a2a2a;">        </span><span style="color:#7f0055;font-weight:bold;letter-spacing:0.9px;">final</span><span style="color:#2a2a2a;"> LDAPInterface</span></div>
<div class="t code" style="left:2px;top:243.84px;"><span style="color:#2a2a2a;">        </span><span style="color:#7f0055;font-weight:bold;letter-spacing:0.9px;">final</span><span style="color:#2a2a2a;"> SearchResult</span></div>
<div class="t code" style="left:2px;top:258.84px;"><span style="color:#2a2a2a;">        </span><span style="color:#2a2a2a;font-style:italic;">assertThat</span></div>
<div class="t code" style="left:2px;top:273.84px;"><span style="color:#2a2a2a;">        List&lt;SearchResult</span></div>
<div class="t code" style="left:2px;top:288.84px;"><span style="color:#2a2a2a;">        </span><span style="color:#2a2a2a;font-style:italic;">assertThat</span></div>
<div class="t code" style="left:2px;top:303.84px;"><span style="color:#2a2a2a;">        </span><span style="color:#2a2a2a;font-style:italic;">assertThat</span></div>
<div class="t code" style="left:2px;top:318.84px;"><span style="color:#2a2a2a;">        </span><span style="color:#2a2a2a;font-style:italic;">assertThat</span></div>
<div class="t code" style="left:2px;top:333.84px;"><span style="color:#2a2a2a;">    }</span></div>
<div class="t code" style="left:2px;top:363.84px;"><span style="color:#2a2a2a;">    </span><span style="color:#646464;">@Test</span></div>
<div class="t code" style="left:2px;top:378.84px;"><span style="color:#2a2a2a;">    </span><span style="color:#7f0055;font-weight:bold;letter-spacing:0.9px;">public</span><span style="color:#2a2a2a;"> </span><span style="color:#7f0055;font-weight:bold;letter-spacing:0.9px;">void</span><span style="color:#2a2a2a;"> shouldFind</span></div>
<div class="t code" style="left:2px;top:393.84px;"><span style="color:#2a2a2a;">        </span><span style="color:#7f0055;font-weight:bold;letter-spacing:0.9px;">final</span><span style="color:#2a2a2a;"> LDAPInterface</span></div>
<div class="t code" style="left:2px;top:408.84px;"><span style="color:#2a2a2a;">        </span><span style="color:#7f0055;font-weight:bold;letter-spacing:0.9px;">final</span><span style="color:#2a2a2a;"> SearchResult</span></div>
<div class="t code" style="left:2px;top:438.84px;"><span style="color:#2a2a2a;">        </span><span style="color:#2a2a2a;font-style:italic;">assertThat</span></div>
<div class="t code" style="left:2px;top:453.84px;"><span style="color:#2a2a2a;">        </span><span style="color:#2a2a2a;font-style:italic;">assertThat</span></div>
<div class="t code" style="left:2px;top:468.84px;"><span style="color:#2a2a2a;">    }</span></div>
<div class="t code" style="left:2px;top:483.84px;"><span style="color:#2a2a2a;">}</span></div>
<svg style="position:absolute;left:101.39999999999999px;top:87.5px;" width="15" height="4" viewBox="0 0 15 4"><path d="M0 2.5 l2 -2 l2 2 l2 -2 l2 2 l2 -2 l2 2 l2 -2" fill="none" stroke="#f4683c" stroke-width="0.8"/></svg>
</div>
<div class="t code" style="left:322.9px;top:151.84px;"><span style="color:#7a7a7a;">1</span></div>
<div class="t code" style="left:322.9px;top:166.84px;"><span style="color:#7a7a7a;">2</span></div>
<div class="t code" style="left:322.9px;top:181.84px;"><span style="color:#7a7a7a;">3</span></div>
<div class="t code" style="left:315.8px;top:196.84px;"><span style="color:#7a7a7a;">17</span></div>
<div class="t code" style="left:315.8px;top:211.84px;"><span style="color:#7a7a7a;">18</span></div>
<div class="t code" style="left:315.8px;top:226.84px;"><span style="color:#7a7a7a;">19</span></div>
<div class="t code" style="left:315.8px;top:241.84px;"><span style="color:#7a7a7a;">20</span></div>
<div class="t code" style="left:315.8px;top:256.84px;"><span style="color:#7a7a7a;">21</span></div>
<div class="t code" style="left:315.8px;top:271.84px;"><span style="color:#7a7a7a;">22</span></div>
<div class="t code" style="left:315.8px;top:286.84px;"><span style="color:#7a7a7a;">23</span></div>
<div class="t code" style="left:315.8px;top:301.84px;"><span style="color:#7a7a7a;">24</span></div>
<div class="t code" style="left:315.8px;top:316.84px;"><span style="color:#7a7a7a;">25</span></div>
<div class="t code" style="left:315.8px;top:331.84px;"><span style="color:#7a7a7a;">26</span></div>
<div class="t code" style="left:315.8px;top:346.84px;"><span style="color:#7a7a7a;">27</span></div>
<div class="t code" style="left:315.8px;top:361.84px;"><span style="color:#7a7a7a;">28</span></div>
<div class="t code" style="left:315.8px;top:376.84px;"><span style="color:#7a7a7a;">29</span></div>
<div class="t code" style="left:315.8px;top:391.84px;"><span style="color:#7a7a7a;">30</span></div>
<div class="t code" style="left:315.8px;top:406.84px;"><span style="color:#7a7a7a;">31</span></div>
<div class="t code" style="left:315.8px;top:421.84px;"><span style="color:#7a7a7a;">32</span></div>
<div class="t code" style="left:315.8px;top:436.84px;"><span style="color:#7a7a7a;">33</span></div>
<div class="t code" style="left:315.8px;top:451.84px;"><span style="color:#7a7a7a;">34</span></div>
<div class="t code" style="left:315.8px;top:466.84px;"><span style="color:#7a7a7a;">35</span></div>
<div class="t code" style="left:315.8px;top:481.84px;"><span style="color:#7a7a7a;">36</span></div>
<div class="t code" style="left:315.8px;top:496.84px;"><span style="color:#7a7a7a;">37</span></div>
<div class="t code" style="left:315.8px;top:511.84px;"><span style="color:#7a7a7a;">38</span></div>
<div class="t code" style="left:315.8px;top:526.84px;"><span style="color:#7a7a7a;">39</span></div>
<div class="t code" style="left:315.8px;top:541.84px;"><span style="color:#7a7a7a;">40</span></div>
<div class="t code" style="left:315.8px;top:556.84px;"><span style="color:#7a7a7a;">41</span></div>
<div class="t code" style="left:315.8px;top:571.84px;"><span style="color:#7a7a7a;">42</span></div>
<div class="t code" style="left:315.8px;top:586.84px;"><span style="color:#7a7a7a;">43</span></div>
<div class="t code" style="left:315.8px;top:601.84px;"><span style="color:#7a7a7a;">44</span></div>
<div class="t code" style="left:315.8px;top:616.84px;"><span style="color:#7a7a7a;">45</span></div>
<div class="t code" style="left:315.8px;top:631.84px;"><span style="color:#7a7a7a;">46</span></div>
<div class="t code" style="left:315.8px;top:646.84px;"><span style="color:#7a7a7a;">47</span></div>
<svg style="position:absolute;left:331.5px;top:181.0px;" width="8" height="8" viewBox="0 0 8 8"><circle cx="4" cy="4" r="3.4" fill="#eef2f6" stroke="#8a97a6" stroke-width="0.9"/><line x1="2" y1="4" x2="6" y2="4" stroke="#333" stroke-width="1"/><line x1="4" y1="2" x2="4" y2="6" stroke="#333" stroke-width="1"/></svg>
<svg style="position:absolute;left:331.5px;top:211.0px;" width="8" height="8" viewBox="0 0 8 8"><circle cx="4" cy="4" r="3.4" fill="#eef2f6" stroke="#8a97a6" stroke-width="0.9"/><line x1="2" y1="4" x2="6" y2="4" stroke="#333" stroke-width="1"/></svg>
<svg style="position:absolute;left:331.5px;top:286.0px;" width="8" height="8" viewBox="0 0 8 8"><circle cx="4" cy="4" r="3.4" fill="#eef2f6" stroke="#8a97a6" stroke-width="0.9"/><line x1="2" y1="4" x2="6" y2="4" stroke="#333" stroke-width="1"/></svg>
<svg style="position:absolute;left:331.5px;top:346.0px;" width="8" height="8" viewBox="0 0 8 8"><circle cx="4" cy="4" r="3.4" fill="#eef2f6" stroke="#8a97a6" stroke-width="0.9"/><line x1="2" y1="4" x2="6" y2="4" stroke="#333" stroke-width="1"/></svg>
<svg style="position:absolute;left:331.5px;top:511.0px;" width="8" height="8" viewBox="0 0 8 8"><circle cx="4" cy="4" r="3.4" fill="#eef2f6" stroke="#8a97a6" stroke-width="0.9"/><line x1="2" y1="4" x2="6" y2="4" stroke="#333" stroke-width="1"/></svg>
<div style="left:340px;top:722px;width:114px;height:11px;background:#b9b9b9;"></div>
<div style="left:342px;top:723px;width:112px;height:9px;background:linear-gradient(#8e8e8e,#a4a4a4 50%,#8e8e8e);border-radius:5px 0 0 5px;"></div>
<div style="left:307px;top:722px;width:33px;height:11px;background:#fbfbfb;"></div>
<div style="left:9px;top:10px;width:1000px;height:1px;background:#788290;border-radius:4px 4px 0 0;"></div>
<div style="left:10px;top:26px;width:999px;height:3px;background:#1f1f1f;"></div>
<svg style="position:absolute;left:16px;top:12px;" width="15" height="15" viewBox="0 0 15 15"><rect width="15" height="15" fill="#58448a"/><rect y="8" width="15" height="7" fill="#6a4ca6"/><circle cx="13.10" cy="7.50" r="1.15" fill="#eee"/><circle cx="12.03" cy="10.79" r="1.15" fill="#eee"/><circle cx="9.23" cy="12.83" r="1.15" fill="#eee"/><circle cx="5.77" cy="12.83" r="1.15" fill="#eee"/><circle cx="2.97" cy="10.79" r="1.15" fill="#eee"/><circle cx="1.90" cy="7.50" r="1.15" fill="#eee"/><circle cx="2.97" cy="4.21" r="1.15" fill="#eee"/><circle cx="5.77" cy="2.17" r="1.15" fill="#eee"/><circle cx="9.23" cy="2.17" r="1.15" fill="#eee"/><circle cx="12.03" cy="4.21" r="1.15" fill="#eee"/><circle cx="7.5" cy="7.5" r="5" fill="#ececec"/><circle cx="7.5" cy="7.5" r="3.6" fill="#3c3454"/><circle cx="7.5" cy="8" r="2.6" fill="#6a5a98"/><rect x="4.5" y="7.3" width="6" height="0.9" fill="#9a8ac0"/></svg>
<svg style="position:absolute;left:946px;top:16px;" width="9" height="6" viewBox="0 0 9 6"><path d="M1 1 L4.5 4.5 L8 1" fill="none" stroke="#c8c8c8" stroke-width="1.3"/></svg>
<svg style="position:absolute;left:968px;top:16px;" width="9" height="6" viewBox="0 0 9 6"><path d="M1 5 L4.5 1.5 L8 5" fill="none" stroke="#c8c8c8" stroke-width="1.3"/></svg>
<div style="left:984px;top:11px;width:1px;height:15px;background:#3c3c3c;"></div>
<svg style="position:absolute;left:992px;top:15px;" width="8" height="8" viewBox="0 0 8 8"><path d="M1 1 L7 7 M7 1 L1 7" fill="none" stroke="#d0d0d0" stroke-width="1.6"/></svg>
<div style="left:78px;top:44px;width:8px;height:1px;background:#2a2a2a;"></div>
<div style="left:159px;top:44px;width:6px;height:1px;background:#2a2a2a;"></div>
<svg style="position:absolute;left:11px;top:55px;" width="3" height="20" viewBox="0 0 3 20"><rect x="1" y="1.0" width="1.2" height="1.2" fill="#f4f0e6"/><rect x="0" y="0.0" width="1.3" height="1.3" fill="#958a76"/><rect x="1" y="5.5" width="1.2" height="1.2" fill="#f4f0e6"/><rect x="0" y="4.5" width="1.3" height="1.3" fill="#958a76"/><rect x="1" y="10.0" width="1.2" height="1.2" fill="#f4f0e6"/><rect x="0" y="9.0" width="1.3" height="1.3" fill="#958a76"/><rect x="1" y="14.5" width="1.2" height="1.2" fill="#f4f0e6"/><rect x="0" y="13.5" width="1.3" height="1.3" fill="#958a76"/></svg>
<svg style="position:absolute;left:19px;top:55px;" width="15" height="14" viewBox="0 0 15 14"><rect x="0.5" y="2.5" width="12" height="10" fill="#f4f8fc" stroke="#b49a5a"/><rect x="1" y="3" width="11" height="2.5" fill="#5a9ad6"/><path d="M3 12 Q10 11 12 5" stroke="#e8c060" fill="none"/><path d="M11.5 0 L12.5 2.5 L15 3 L12.5 4 L11.5 6.5 L10.5 4 L8 3 L10.5 2.5Z" fill="#f8d040" stroke="#c89a20" stroke-width="0.5"/></svg>
<svg style="position:absolute;left:44px;top:61px;" width="7" height="4.5" viewBox="0 0 7 4.5"><path d="M0 0 L7 0 L3.5 4.5 Z" fill="#2a2a2a"/></svg>
<svg style="position:absolute;left:64px;top:55px;" width="14" height="14" viewBox="0 0 14 14"><rect x="0.5" y="0.5" width="13" height="13" rx="1.5" fill="#b9c6d6" stroke="#9aaac0"/><rect x="3" y="1" width="8" height="5" fill="#e6ecf2"/><rect x="4" y="9" width="6" height="4" fill="#dfe6ee"/></svg>
<svg style="position:absolute;left:87px;top:55px;" width="14" height="14" viewBox="0 0 14 14"><rect x="0.5" y="0.5" width="10" height="10" rx="1" fill="#c9d3de" stroke="#aab6c4"/><rect x="3.5" y="3.5" width="10" height="10" rx="1.5" fill="#b9c6d6" stroke="#9aaac0"/><rect x="6" y="4" width="5" height="3.5" fill="#e6ecf2"/></svg>
<svg style="position:absolute;left:106px;top:55px;" width="3" height="20" viewBox="0 0 3 20"><rect x="1" y="1.0" width="1.2" height="1.2" fill="#f4f0e6"/><rect x="0" y="0.0" width="1.3" height="1.3" fill="#958a76"/><rect x="1" y="5.5" width="1.2" height="1.2" fill="#f4f0e6"/><rect x="0" y="4.5" width="1.3" height="1.3" fill="#958a76"/><rect x="1" y="10.0" width="1.2" height="1.2" fill="#f4f0e6"/><rect x="0" y="9.0" width="1.3" height="1.3" fill="#958a76"/><rect x="1" y="14.5" width="1.2" height="1.2" fill="#f4f0e6"/><rect x="0" y="13.5" width="1.3" height="1.3" fill="#958a76"/></svg>
<div style="left:110px;top:51px;width:22px;height:21px;background:linear-gradient(#909090,#9e9e9e);border:1px solid #7a7a7a;border-radius:3px;box-shadow:inset 0 1px 1px rgba(0,0,0,.2);"></div>
<svg style="position:absolute;left:114px;top:55px;" width="14" height="14" viewBox="0 0 14 14"><path d="M2 7 Q2 3 6 3 L6 1 L9 4 L6 7 L6 5 Q4 5 4 7Z" fill="#eee8d8"/><path d="M12 7 Q12 11 8 11 L8 13 L5 10 L8 7 L8 9 Q10 9 10 7Z" fill="#eee8d8"/></svg>
<svg style="position:absolute;left:136px;top:55px;" width="16" height="14" viewBox="0 0 16 14"><rect x="0" y="0.5" width="3" height="3" fill="#7a7a7a"/><rect x="4" y="0" width="8" height="4" fill="#22d622"/><rect x="13" y="0.5" width="3" height="3" fill="#8a8a8a"/><rect x="0" y="5.5" width="2" height="3" fill="#7a7a7a"/><rect x="3" y="5.5" width="8" height="3" fill="#8a8a8a"/><rect x="12" y="5" width="4" height="4" fill="#22d622"/><rect x="0" y="10.5" width="2" height="3" fill="#7a7a7a"/><rect x="3" y="10" width="8" height="4" fill="#22d622"/><rect x="12" y="10.5" width="4" height="3" fill="#8a8a8a"/></svg>
<svg style="position:absolute;left:161px;top:55px;" width="12" height="14" viewBox="0 0 12 14"><rect x="0.5" y="0.5" width="11" height="13" fill="#f6f9fc" stroke="#c8b88a"/><circle cx="7" cy="3.5" r="1" fill="#3a6ac0"/><path d="M6 6 L5 12" stroke="#3a6ac0" stroke-width="1.6"/></svg>
<svg style="position:absolute;left:183px;top:55px;" width="13" height="14" viewBox="0 0 13 14"><rect x="0.5" y="0.5" width="12" height="13" fill="#f4f4f4" stroke="#aaa"/><rect x="2" y="3" width="7" height="1.5" fill="#333"/><rect x="4" y="5.5" width="7" height="1.2" fill="#666"/><rect x="4" y="7.5" width="7" height="1.2" fill="#888"/><rect x="4" y="9.5" width="5" height="1.2" fill="#999"/></svg>
<svg style="position:absolute;left:206px;top:55px;" width="16" height="14" viewBox="0 0 16 14"><rect x="6.5" y="3.5" width="8" height="10" fill="#f6eedc" stroke="#b08a40"/><text x="10.5" y="12" font-family="Liberation Sans" font-weight="bold" font-size="7" text-anchor="middle" fill="#2a6ab0">S</text><circle cx="5" cy="5" r="5" fill="#2e9a3a"/><circle cx="5" cy="5" r="4" fill="#4cb84a"/><path d="M3.5 2.5 L7.5 5 L3.5 7.5Z" fill="#fff"/></svg>
<svg style="position:absolute;left:229px;top:55px;" width="16" height="14" viewBox="0 0 16 14"><rect x="6.5" y="3.5" width="8" height="10" fill="#f6eedc" stroke="#b08a40"/><text x="10.5" y="12" font-family="Liberation Sans" font-weight="bold" font-size="7" text-anchor="middle" fill="#d02020">EE</text><circle cx="5" cy="5" r="5" fill="#2e9a3a"/><circle cx="5" cy="5" r="4" fill="#4cb84a"/><path d="M3.5 2.5 L7.5 5 L3.5 7.5Z" fill="#fff"/></svg>
<svg style="position:absolute;left:248px;top:55px;" width="3" height="20" viewBox="0 0 3 20"><rect x="1" y="1.0" width="1.2" height="1.2" fill="#f4f0e6"/><rect x="0" y="0.0" width="1.3" height="1.3" fill="#958a76"/><rect x="1" y="5.5" width="1.2" height="1.2" fill="#f4f0e6"/><rect x="0" y="4.5" width="1.3" height="1.3" fill="#958a76"/><rect x="1" y="10.0" width="1.2" height="1.2" fill="#f4f0e6"/><rect x="0" y="9.0" width="1.3" height="1.3" fill="#958a76"/><rect x="1" y="14.5" width="1.2" height="1.2" fill="#f4f0e6"/><rect x="0" y="13.5" width="1.3" height="1.3" fill="#958a76"/></svg>
<svg style="position:absolute;left:257px;top:55px;" width="13" height="12" viewBox="0 0 13 12"><rect x="0.5" y="0.5" width="12" height="9" rx="1" fill="#3a6ab8" stroke="#2a5098"/><rect x="2" y="2" width="9" height="6" fill="#e8f0fa"/><rect x="3" y="3.5" width="5" height="1" fill="#2a5098"/><rect x="3" y="5.5" width="6" height="1" fill="#2a5098"/><rect x="3" y="10" width="7" height="2" fill="#2a5098"/></svg>
<svg style="position:absolute;left:275px;top:55px;" width="3" height="20" viewBox="0 0 3 20"><rect x="1" y="1.0" width="1.2" height="1.2" fill="#f4f0e6"/><rect x="0" y="0.0" width="1.3" height="1.3" fill="#958a76"/><rect x="1" y="5.5" width="1.2" height="1.2" fill="#f4f0e6"/><rect x="0" y="4.5" width="1.3" height="1.3" fill="#958a76"/><rect x="1" y="10.0" width="1.2" height="1.2" fill="#f4f0e6"/><rect x="0" y="9.0" width="1.3" height="1.3" fill="#958a76"/><rect x="1" y="14.5" width="1.2" height="1.2" fill="#f4f0e6"/><rect x="0" y="13.5" width="1.3" height="1.3" fill="#958a76"/></svg>
<svg style="position:absolute;left:285px;top:56px;" width="12" height="12" viewBox="0 0 12 12"><circle cx="6" cy="6" r="4" fill="#e8f0f8" stroke="#3a78b8" stroke-width="1.6"/><circle cx="6" cy="6" r="2" fill="#5a90c8"/><path d="M0.5 0.5 L11.5 11.5" stroke="#223a7a" stroke-width="1.3"/></svg>
<div style="left:306px;top:54px;width:1px;height:15px;background:#a4a4a4;"></div>
<div style="left:307px;top:54px;width:1px;height:15px;background:#dedede;"></div>
<svg style="position:absolute;left:318px;top:57px;" width="14" height="11" viewBox="0 0 14 11"><rect x="0.5" y="0.5" width="4" height="10" fill="#ecdca8" stroke="#c8b070"/><path d="M6 0.5 L13.5 5.5 L6 10.5Z" fill="#8ec88e" stroke="#7ab87a" stroke-width="0.5"/></svg>
<svg style="position:absolute;left:342px;top:57px;" width="11" height="11" viewBox="0 0 11 11"><rect x="0.5" y="0.5" width="4" height="10" fill="#ecdca8" stroke="#c8b070"/><rect x="6" y="0.5" width="4" height="10" fill="#ecdca8" stroke="#c8b070"/></svg>
<svg style="position:absolute;left:365px;top:57px;" width="11" height="11" viewBox="0 0 11 11"><rect x="0.5" y="0.5" width="10" height="10" rx="1" fill="#e48888" stroke="#d07070"/></svg>
<svg style="position:absolute;left:387px;top:56px;" width="13" height="11" viewBox="0 0 13 11"><path d="M3 9 L4 2 L9 8 L10 2" stroke="#e08a8a" stroke-width="1.1" fill="none"/><circle cx="2.5" cy="9" r="2" fill="#e89090"/><circle cx="10.5" cy="2.5" r="2" fill="#e89090"/></svg>
<svg style="position:absolute;left:409px;top:57px;" width="14" height="11" viewBox="0 0 14 11"><path d="M2 1.5 L7 1.5 L7 6" stroke="#e6cc8a" stroke-width="2.4" fill="none"/><path d="M4.5 5.5 L9.5 5.5 L7 8.5Z" fill="#e6cc8a"/><rect x="0" y="9.5" width="4" height="1.3" fill="#7a9cc8"/><rect x="10" y="9.5" width="4" height="1.3" fill="#7a9cc8"/></svg>
<svg style="position:absolute;left:432px;top:57px;" width="14" height="11" viewBox="0 0 14 11"><path d="M2 6 Q2 1.5 7 1.5 Q11 1.5 11 5" stroke="#e6cc8a" stroke-width="2.2" fill="none"/><path d="M8.5 4.5 L13.5 4.5 L11 7.5Z" fill="#e6cc8a"/><rect x="5" y="9.5" width="4" height="1.3" fill="#7a9cc8"/></svg>
<svg style="position:absolute;left:455px;top:57px;" width="14" height="11" viewBox="0 0 14 11"><path d="M7 9 L7 4 L11 4" stroke="#e6cc8a" stroke-width="2.2" fill="none"/><path d="M10.5 1.5 L13.5 4 L10.5 6.5Z" fill="#e6cc8a"/><rect x="0" y="9.5" width="3" height="1.3" fill="#7a9cc8"/><rect x="10" y="9.5" width="4" height="1.3" fill="#7a9cc8"/></svg>
<div style="left:478px;top:54px;width:1px;height:15px;background:#a4a4a4;"></div>
<div style="left:479px;top:54px;width:1px;height:15px;background:#dedede;"></div>
<svg style="position:absolute;left:488px;top:56px;" width="15" height="13" viewBox="0 0 15 13"><rect x="0" y="0" width="11" height="1.5" fill="#6a9ad0"/><rect x="0" y="3" width="11" height="1.5" fill="#6a9ad0"/><rect x="0" y="6" width="8" height="1.5" fill="#6a9ad0"/><path d="M6 8 Q8 11 11 10 L11 8 L14 10.5 L11 13 L11 11.5 Q7 12 6 8Z" fill="#e8c878" stroke="#c8a050" stroke-width="0.5"/></svg>
<div style="left:508px;top:51px;width:21px;height:21px;background:linear-gradient(#909090,#9e9e9e);border:1px solid #7a7a7a;border-radius:3px;box-shadow:inset 0 1px 1px rgba(0,0,0,.2);"></div>
<svg style="position:absolute;left:511px;top:55px;" width="15" height="14" viewBox="0 0 15 14"><path d="M1 4.5 L11 4.5" stroke="#f0b020" stroke-width="2.4"/><path d="M10 1 L14 4.5 L10 8Z" fill="#f0b020"/><path d="M7 4 L7 10" stroke="#f0b020" stroke-width="2.4"/><path d="M4.5 9 L9.5 9 L7 12Z" fill="#f0b020"/><rect x="1" y="12" width="3" height="1.3" fill="#3a6ab8"/><rect x="10" y="12" width="4" height="1.3" fill="#3a6ab8"/></svg>
<svg style="position:absolute;left:531px;top:55px;" width="3" height="20" viewBox="0 0 3 20"><rect x="1" y="1.0" width="1.2" height="1.2" fill="#f4f0e6"/><rect x="0" y="0.0" width="1.3" height="1.3" fill="#958a76"/><rect x="1" y="5.5" width="1.2" height="1.2" fill="#f4f0e6"/><rect x="0" y="4.5" width="1.3" height="1.3" fill="#958a76"/><rect x="1" y="10.0" width="1.2" height="1.2" fill="#f4f0e6"/><rect x="0" y="9.0" width="1.3" height="1.3" fill="#958a76"/><rect x="1" y="14.5" width="1.2" height="1.2" fill="#f4f0e6"/><rect x="0" y="13.5" width="1.3" height="1.3" fill="#958a76"/></svg>
<svg style="position:absolute;left:540px;top:55px;" width="14" height="14" viewBox="0 0 14 14"><rect x="0.5" y="2.5" width="7" height="7" fill="#b8b8c8" stroke="#9a9aaa"/><path d="M3 6 L3 14 L8 9Z" fill="#555"/><circle cx="9.5" cy="4.5" r="4" fill="#7ac87a" stroke="#4a984a"/><text x="9.5" y="7" font-size="6" font-family="Liberation Sans" font-weight="bold" text-anchor="middle" fill="#fff">C</text></svg>
<svg style="position:absolute;left:562px;top:55px;" width="14" height="14" viewBox="0 0 14 14"><path d="M13 0 L7 8 L9 10 L14 2Z" fill="#b8b0a0"/><path d="M7 8 Q3 9 1 13 Q6 13 9 10Z" fill="#f0d860"/></svg>
<svg style="position:absolute;left:586px;top:55px;" width="13" height="13" viewBox="0 0 13 13"><path d="M3 3 L6 6 M10 2 L7 6" stroke="#c0c0c0" stroke-width="1.2"/><circle cx="6" cy="9" r="3.5" fill="#a898c8"/><rect x="3" y="8.5" width="6" height="1" fill="#d8d0e8"/></svg>
<svg style="position:absolute;left:609px;top:56px;" width="12" height="13" viewBox="0 0 12 13"><rect x="0.5" y="0.5" width="11" height="12" fill="#e6ecf4" stroke="#d8c89a"/><rect x="2" y="2" width="8" height="1" fill="#9ab0d0"/><rect x="3" y="4" width="6" height="5" fill="none" stroke="#7a90b8"/><rect x="2" y="10" width="8" height="1" fill="#9ab0d0"/></svg>
<svg style="position:absolute;left:632px;top:56px;" width="12" height="13" viewBox="0 0 12 13"><rect x="0.5" y="0.5" width="11" height="12" fill="#eef2f8" stroke="#d8c89a"/><path d="M6 3 L6 11 M8.5 3 L8.5 11 M9.5 3 L5 3 Q3 3 3 5 Q3 7 5 7 L6 7" stroke="#7a98c0" stroke-width="1.3" fill="none"/></svg>
<svg style="position:absolute;left:650px;top:55px;" width="3" height="20" viewBox="0 0 3 20"><rect x="1" y="1.0" width="1.2" height="1.2" fill="#f4f0e6"/><rect x="0" y="0.0" width="1.3" height="1.3" fill="#958a76"/><rect x="1" y="5.5" width="1.2" height="1.2" fill="#f4f0e6"/><rect x="0" y="4.5" width="1.3" height="1.3" fill="#958a76"/><rect x="1" y="10.0" width="1.2" height="1.2" fill="#f4f0e6"/><rect x="0" y="9.0" width="1.3" height="1.3" fill="#958a76"/><rect x="1" y="14.5" width="1.2" height="1.2" fill="#f4f0e6"/><rect x="0" y="13.5" width="1.3" height="1.3" fill="#958a76"/></svg>
<svg style="position:absolute;left:659px;top:56px;" width="14" height="13" viewBox="0 0 14 13"><path d="M1 2 L4 5 M13 2 L10 5 M0 7 L3 7 M14 7 L11 7 M1 12 L4 9 M13 12 L10 9" stroke="#2a6a5a" stroke-width="1.2"/><ellipse cx="7" cy="7" rx="4" ry="4.5" fill="#6ac0a0" stroke="#2a7a5a"/><ellipse cx="7.5" cy="6" rx="2" ry="2" fill="#b8f0c0"/></svg>
<svg style="position:absolute;left:684px;top:61px;" width="7" height="4.5" viewBox="0 0 7 4.5"><path d="M0 0 L7 0 L3.5 4.5 Z" fill="#2a2a2a"/></svg>
<svg style="position:absolute;left:704px;top:55px;" width="13" height="13" viewBox="0 0 13 13"><circle cx="6.5" cy="6.5" r="6.2" fill="#2a8a3a"/><circle cx="6.5" cy="6.2" r="5.3" fill="#4cb84a"/><path d="M5 3 L9.5 6.5 L5 10Z" fill="#fff"/></svg>
<svg style="position:absolute;left:728px;top:61px;" width="7" height="4.5" viewBox="0 0 7 4.5"><path d="M0 0 L7 0 L3.5 4.5 Z" fill="#2a2a2a"/></svg>
<svg style="position:absolute;left:748px;top:55px;" width="15" height="14" viewBox="0 0 15 14"><circle cx="5" cy="5" r="5" fill="#2e9a3a"/><circle cx="5" cy="5" r="4" fill="#4cb84a"/><path d="M3.5 2.5 L7.5 5 L3.5 7.5Z" fill="#fff"/><rect x="6" y="8" width="8.5" height="5.5" rx="1" fill="#e02020"/><rect x="8" y="6.5" width="4" height="2" fill="none" stroke="#c01010"/></svg>
<svg style="position:absolute;left:773px;top:61px;" width="7" height="4.5" viewBox="0 0 7 4.5"><path d="M0 0 L7 0 L3.5 4.5 Z" fill="#2a2a2a"/></svg>
<svg style="position:absolute;left:790px;top:55px;" width="3" height="20" viewBox="0 0 3 20"><rect x="1" y="1.0" width="1.2" height="1.2" fill="#f4f0e6"/><rect x="0" y="0.0" width="1.3" height="1.3" fill="#958a76"/><rect x="1" y="5.5" width="1.2" height="1.2" fill="#f4f0e6"/><rect x="0" y="4.5" width="1.3" height="1.3" fill="#958a76"/><rect x="1" y="10.0" width="1.2" height="1.2" fill="#f4f0e6"/><rect x="0" y="9.0" width="1.3" height="1.3" fill="#958a76"/><rect x="1" y="14.5" width="1.2" height="1.2" fill="#f4f0e6"/><rect x="0" y="13.5" width="1.3" height="1.3" fill="#958a76"/></svg>
<svg style="position:absolute;left:799px;top:55px;" width="14" height="14" viewBox="0 0 14 14"><rect x="0.5" y="3.5" width="10" height="10" fill="#e8b888" stroke="#b07a4a"/><path d="M5.5 2 L5.5 14 M0 8.5 L11 8.5" stroke="#8a4a2a"/><path d="M11 0 L12 2.5 L14.5 3 L12 4 L11 6.5 L10 4 L7.5 3 L10 2.5Z" fill="#f8d040" stroke="#c89a20" stroke-width="0.5"/></svg>
<svg style="position:absolute;left:822px;top:55px;" width="14" height="14" viewBox="0 0 14 14"><circle cx="6.5" cy="7.5" r="6" fill="#2e9a3a"/><text x="6.5" y="11" font-size="9" font-family="Liberation Sans" font-weight="bold" text-anchor="middle" fill="#fff">C</text><path d="M11 0 L12 2.5 L14.5 3 L12 4 L11 6.5 L10 4 L7.5 3 L10 2.5Z" fill="#f8d040" stroke="#c89a20" stroke-width="0.5"/></svg>
<svg style="position:absolute;left:846px;top:61px;" width="7" height="4.5" viewBox="0 0 7 4.5"><path d="M0 0 L7 0 L3.5 4.5 Z" fill="#2a2a2a"/></svg>
<svg style="position:absolute;left:862px;top:55px;" width="3" height="20" viewBox="0 0 3 20"><rect x="1" y="1.0" width="1.2" height="1.2" fill="#f4f0e6"/><rect x="0" y="0.0" width="1.3" height="1.3" fill="#958a76"/><rect x="1" y="5.5" width="1.2" height="1.2" fill="#f4f0e6"/><rect x="0" y="4.5" width="1.3" height="1.3" fill="#958a76"/><rect x="1" y="10.0" width="1.2" height="1.2" fill="#f4f0e6"/><rect x="0" y="9.0" width="1.3" height="1.3" fill="#958a76"/><rect x="1" y="14.5" width="1.2" height="1.2" fill="#f4f0e6"/><rect x="0" y="13.5" width="1.3" height="1.3" fill="#958a76"/></svg>
<svg style="position:absolute;left:870px;top:55px;" width="15" height="13" viewBox="0 0 15 13"><path d="M0.5 5.5 L5 5.5 L6 7 L13 7 L11 12.5 L0.5 12.5Z" fill="#f4c878" stroke="#c08a30"/><circle cx="6" cy="3.5" r="3" fill="#6a5ab8"/><circle cx="10.5" cy="5.5" r="3" fill="#3aa84a"/><rect x="8.5" y="5" width="4" height="1" fill="#c8f0c8"/></svg>
<svg style="position:absolute;left:893px;top:55px;" width="15" height="13" viewBox="0 0 15 13"><rect x="5" y="1" width="8" height="7" fill="#dfe8f4" stroke="#8aa0c0"/><path d="M0.5 5.5 L4 5.5 L5 7 L13 7 L11 12.5 L0.5 12.5Z" fill="#f4c878" stroke="#c08a30"/></svg>
<svg style="position:absolute;left:916px;top:55px;" width="15" height="14" viewBox="0 0 15 14"><path d="M14 1 Q13 0 12 1 L3 10 L5 12 L14 3Z" fill="#f0c040" stroke="#b08020" stroke-width="0.6"/><circle cx="5" cy="10" r="2.8" fill="#a0a0a0"/><path d="M1 14 L3 11" stroke="#fff" stroke-width="2"/></svg>
<svg style="position:absolute;left:942px;top:61px;" width="7" height="4.5" viewBox="0 0 7 4.5"><path d="M0 0 L7 0 L3.5 4.5 Z" fill="#2a2a2a"/></svg>
<svg style="position:absolute;left:11px;top:82px;" width="3" height="20" viewBox="0 0 3 20"><rect x="1" y="1.0" width="1.2" height="1.2" fill="#f4f0e6"/><rect x="0" y="0.0" width="1.3" height="1.3" fill="#958a76"/><rect x="1" y="5.5" width="1.2" height="1.2" fill="#f4f0e6"/><rect x="0" y="4.5" width="1.3" height="1.3" fill="#958a76"/><rect x="1" y="10.0" width="1.2" height="1.2" fill="#f4f0e6"/><rect x="0" y="9.0" width="1.3" height="1.3" fill="#958a76"/><rect x="1" y="14.5" width="1.2" height="1.2" fill="#f4f0e6"/><rect x="0" y="13.5" width="1.3" height="1.3" fill="#958a76"/></svg>
<svg style="position:absolute;left:19px;top:84px;" width="14" height="12" viewBox="0 0 14 12"><path d="M0.8 6 L6 0.8 L6 3.5 L13.2 3.5 L13.2 8.5 L6 8.5 L6 11.2Z" fill="#f8dc88" stroke="#c89838" stroke-width="1"/></svg>
<svg style="position:absolute;left:44px;top:88px;" width="7" height="4.5" viewBox="0 0 7 4.5"><path d="M0 0 L7 0 L3.5 4.5 Z" fill="#2a2a2a"/></svg>
<svg style="position:absolute;left:64px;top:84px;" width="14" height="12" viewBox="0 0 14 12"><path d="M13.2 6 L8 0.8 L8 3.5 L0.8 3.5 L0.8 8.5 L8 8.5 L8 11.2Z" fill="#f4ecd0" stroke="#d8c89a" stroke-width="1"/></svg>
<svg style="position:absolute;left:89px;top:89px;" width="7" height="4" viewBox="0 0 7 4"><path d="M0 0 L7 0 L3.5 4 Z" fill="#8a8a8a"/></svg>
<svg style="position:absolute;left:465px;top:117px;" width="10" height="11" viewBox="0 0 10 11"><rect x="0" y="0" width="1.3" height="11" fill="#8a98aa"/><rect x="1" y="2" width="3" height="1" fill="#8a98aa"/><rect x="1" y="8" width="3" height="1" fill="#8a98aa"/><rect x="4" y="0.5" width="5.5" height="4.5" fill="#d08a40" stroke="#a86020" stroke-width="0.6"/><rect x="4" y="6" width="5.5" height="4.5" fill="#d08a40" stroke="#a86020" stroke-width="0.6"/><path d="M4 2.7 L9.5 2.7 M4 8.2 L9.5 8.2" stroke="#f8d0a0" stroke-width="0.7"/></svg>
<svg style="position:absolute;left:586px;top:117px;" width="14" height="13" viewBox="0 0 14 13"><rect x="0.5" y="5.5" width="6" height="6.5" fill="#2aa84a" stroke="#1a8a3a" stroke-width="0.6"/><path d="M1.8 8.5 L3.2 10.3 L6 6.5" stroke="#fff" stroke-width="1.2" fill="none"/><path d="M4 1.5 L8 1.5 M6.5 1.5 L6.5 9 Q6.5 10.5 5 10.5" stroke="#2a9a4a" stroke-width="1.3" fill="none"/><path d="M9 3.5 L9 8 Q9 10.5 11 10.5 Q13 10.5 13 8 L13 3.5 M8.3 3.5 L10 3.5 M12.2 3.5 L13.8 3.5" stroke="#d83a4a" stroke-width="1.1" fill="none"/></svg>
<svg style="position:absolute;left:637px;top:119px;" width="10" height="10" viewBox="0 0 10 10"><path d="M1.8 1.8 L8.2 8.2 M8.2 1.8 L1.8 8.2" stroke="#505050" stroke-width="2.6" stroke-linecap="round"/><path d="M2 2 L8 8 M8 2 L2 8" stroke="#fafafa" stroke-width="1.1" stroke-linecap="round"/></svg>
<svg style="position:absolute;left:138.5px;top:128.5px;" width="10" height="10" viewBox="0 0 10 10"><path d="M1.8 1.8 L8.2 8.2 M8.2 1.8 L1.8 8.2" stroke="#505050" stroke-width="2.6" stroke-linecap="round"/><path d="M2 2 L8 8 M8 2 L2 8" stroke="#fafafa" stroke-width="1.1" stroke-linecap="round"/></svg>
<svg style="position:absolute;left:684px;top:115px;" width="13" height="13" viewBox="0 0 13 13"><path d="M4 0.8 L9 0.8 L9 6.5 L12 6.5 L6.5 12.2 L1 6.5 L4 6.5Z" fill="#f4e0a8" stroke="#d8b870" stroke-width="0.9"/></svg>
<svg style="position:absolute;left:707px;top:115px;" width="13" height="13" viewBox="0 0 13 13"><path d="M4 12.2 L9 12.2 L9 6.5 L12 6.5 L6.5 0.8 L1 6.5 L4 6.5Z" fill="#f4e0a8" stroke="#d8b870" stroke-width="0.9"/></svg>
<svg style="position:absolute;left:730px;top:115px;" width="14" height="14" viewBox="0 0 14 14"><rect x="0.5" y="6.5" width="6" height="6" fill="#2a4a8a"/><path d="M2 8 L5 11 M5 8 L2 11" stroke="#fff" stroke-width="0.9"/><rect x="7" y="0.5" width="6.5" height="6.5" fill="#e02a3a"/><path d="M8.7 2.2 L11.8 5.3 M11.8 2.2 L8.7 5.3" stroke="#fff" stroke-width="0.9"/></svg>
<svg style="position:absolute;left:753px;top:115px;" width="14" height="14" viewBox="0 0 14 14"><rect x="3.5" y="0.5" width="10" height="10" fill="#f8f8f8" stroke="#d8b868"/><circle cx="3.5" cy="10.5" r="3" fill="#eef2f8" stroke="#5a6a88" stroke-width="1"/><path d="M1.5 12.5 L5.5 8.5" stroke="#5a6a88" stroke-width="0.9"/></svg>
<svg style="position:absolute;left:776px;top:115px;" width="14" height="14" viewBox="0 0 14 14"><rect x="0.5" y="0.5" width="13" height="13" fill="#e8eef6" stroke="#b8c4d4"/><rect x="9" y="2" width="3" height="10" fill="#c0d0e8" stroke="#6a88b8" stroke-width="0.6"/><path d="M3 8 L3 6 Q3 4 4.5 4 Q6 4 6 6 L6 8" stroke="#8a6a20" fill="none"/><rect x="1.5" y="8" width="6" height="5" fill="#f0c040" stroke="#b08020" stroke-width="0.6"/></svg>
<div style="left:799px;top:114px;width:1px;height:16px;background:#b4b4b4;"></div>
<div style="left:800px;top:114px;width:1px;height:16px;background:#f0f0f0;"></div>
<div style="left:806px;top:111px;width:21px;height:21px;background:linear-gradient(#e6e6e6,#d2d2d2);border:1px solid #8a8a8a;border-radius:3px;box-shadow:inset 0 0 0 1px #fafafa;"></div>
<svg style="position:absolute;left:809px;top:114px;" width="16" height="15" viewBox="0 0 16 15"><circle cx="6" cy="6" r="5.5" fill="#2a9a3a"/><circle cx="6" cy="5.8" r="4.5" fill="#5ac05a"/><path d="M4.5 3 L8.5 6 L4.5 9Z" fill="#fff"/><path d="M8 10 Q9 13 12 12.5 L12 14 L15 11.5 L12 9 L12 10.5 Q10 11 9.5 9Z" fill="#f0c840" stroke="#c89820" stroke-width="0.5"/></svg>
<svg style="position:absolute;left:832px;top:114px;" width="16" height="15" viewBox="0 0 16 15"><circle cx="6" cy="6" r="5.5" fill="#8ac08a"/><path d="M4.5 3 L8.5 6 L4.5 9Z" fill="#e8f4e8"/><rect x="1" y="8" width="6" height="6" fill="#e88a9a"/><path d="M2.5 9.5 L5.5 12.5 M5.5 9.5 L2.5 12.5" stroke="#fff" stroke-width="0.9"/><path d="M8 10 Q9 13 12 12.5 L12 14 L15 11.5 L12 9 L12 10.5 Q10 11 9.5 9Z" fill="#f0dc98" stroke="#d8c080" stroke-width="0.5"/></svg>
<svg style="position:absolute;left:856px;top:115px;" width="13" height="13" viewBox="0 0 13 13"><rect x="0.5" y="0.5" width="12" height="12" rx="1" fill="#e8a0a0" stroke="#d88a8a"/></svg>
<svg style="position:absolute;left:879px;top:114px;" width="13" height="15" viewBox="0 0 13 15"><path d="M0.5 0.5 L12.5 0.5 L12.5 14.5 Q10 12.5 7 14.5 L0.5 14.5Z" fill="#eef2f8" stroke="#a8b4c8"/><rect x="2.5" y="3" width="2" height="2" fill="#3aa84a"/><rect x="2.5" y="6.5" width="2" height="2" fill="#3aa84a"/><rect x="2.5" y="10" width="2" height="2" fill="#3aa84a"/><rect x="5.5" y="3.5" width="5" height="1" fill="#6a7a98"/><rect x="5.5" y="7" width="5" height="1" fill="#6a7a98"/><rect x="5.5" y="10.5" width="4" height="1" fill="#6a7a98"/></svg>
<svg style="position:absolute;left:903px;top:120px;" width="8" height="5" viewBox="0 0 8 5"><path d="M0 0 L8 0 L4.0 5 Z" fill="#2a2a2a"/></svg>
<svg style="position:absolute;left:932px;top:118px;" width="10" height="7" viewBox="0 0 10 7"><path d="M0.8 0.8 L9.2 0.8 L5 6Z" fill="#fff" stroke="#2a2a2a" stroke-width="1.2"/></svg>
<svg style="position:absolute;left:951px;top:118px;" width="9" height="8" viewBox="0 0 9 8"><rect x="2.5" y="0.5" width="6" height="4.5" rx="0.5" fill="#fff" stroke="#2a2a2a" stroke-width="0.9"/><rect x="2.5" y="0.5" width="6" height="1.3" fill="#2a2a2a"/><rect x="0.5" y="3" width="6" height="4.5" rx="0.5" fill="#fff" stroke="#2a2a2a" stroke-width="0.9"/><rect x="0.5" y="3" width="6" height="1.3" fill="#2a2a2a"/></svg>
<svg style="position:absolute;left:627px;top:168px;" width="7" height="8" viewBox="0 0 7 8"><rect x="0" y="0" width="7" height="8" fill="#d8283a"/><path d="M1.8 2.2 L5.2 5.8 M5.2 2.2 L1.8 5.8" stroke="#fff" stroke-width="0.9"/></svg>
<svg style="position:absolute;left:793px;top:168px;" width="7" height="8" viewBox="0 0 7 8"><rect x="0" y="0" width="7" height="8" fill="#2a4a8a"/><path d="M1.8 2.2 L5.2 5.8 M5.2 2.2 L1.8 5.8" stroke="#fff" stroke-width="0.9"/></svg>
<svg style="position:absolute;left:460px;top:227px;" width="5" height="4" viewBox="0 0 5 4"><path d="M0 0 L5 0 L2.5 4Z" fill="#1a1a1a"/></svg>
<svg style="position:absolute;left:460px;top:267px;" width="5" height="4" viewBox="0 0 5 4"><path d="M0 0 L5 0 L2.5 4Z" fill="#2a2a2a"/></svg>
<svg style="position:absolute;left:470px;top:223px;" width="14" height="13" viewBox="0 0 14 13"><rect x="0.5" y="0.5" width="8" height="12" fill="#f4ecd8" stroke="#b89858" stroke-width="0.8"/><rect x="5.5" y="4.5" width="8" height="8" fill="#f4ecd8" stroke="#b89858" stroke-width="0.8"/><rect x="7" y="6" width="1.2" height="5" fill="#4a9a4a"/><rect x="9" y="7" width="3" height="1" fill="#888"/><rect x="9" y="9.5" width="3" height="1" fill="#888"/><rect x="0" y="6" width="6" height="7" fill="#2aa84a"/><path d="M1.2 9.3 L2.8 11 L5 7.5" stroke="#fff" stroke-width="1.1" fill="none"/></svg>
<svg style="position:absolute;left:477px;top:243px;" width="14" height="13" viewBox="0 0 14 13"><rect x="3.5" y="0.5" width="10" height="12" fill="#f4ecd8" stroke="#b89858" stroke-width="0.8"/><rect x="5.5" y="3" width="1.5" height="1.5" fill="#4a9a4a"/><rect x="5.5" y="6" width="1.5" height="1.5" fill="#4a9a4a"/><rect x="5.5" y="9" width="1.5" height="1.5" fill="#4a9a4a"/><rect x="8" y="3.2" width="4" height="1" fill="#888"/><rect x="8" y="6.2" width="4" height="1" fill="#888"/><rect x="8" y="9.2" width="4" height="1" fill="#888"/><rect x="0" y="6" width="6" height="7" fill="#2aa84a"/><path d="M1.2 9.3 L2.8 11 L5 7.5" stroke="#fff" stroke-width="1.1" fill="none"/></svg>
<svg style="position:absolute;left:470px;top:263px;" width="14" height="13" viewBox="0 0 14 13"><rect x="0.5" y="0.5" width="8" height="12" fill="#f4ecd8" stroke="#b89858" stroke-width="0.8"/><rect x="5.5" y="4.5" width="8" height="8" fill="#f4ecd8" stroke="#b89858" stroke-width="0.8"/><rect x="7" y="6" width="1.2" height="5" fill="#4a9a4a"/><rect x="9" y="7" width="3" height="1" fill="#888"/><rect x="9" y="9.5" width="3" height="1" fill="#888"/><rect x="0" y="6" width="6" height="7" fill="#2aa84a"/><path d="M1.2 9.3 L2.8 11 L5 7.5" stroke="#fff" stroke-width="1.1" fill="none"/></svg>
<svg style="position:absolute;left:477px;top:283px;" width="14" height="13" viewBox="0 0 14 13"><rect x="3.5" y="0.5" width="10" height="12" fill="#f4ecd8" stroke="#b89858" stroke-width="0.8"/><rect x="5.5" y="3" width="1.5" height="1.5" fill="#4a9a4a"/><rect x="5.5" y="6" width="1.5" height="1.5" fill="#4a9a4a"/><rect x="5.5" y="9" width="1.5" height="1.5" fill="#4a9a4a"/><rect x="8" y="3.2" width="4" height="1" fill="#888"/><rect x="8" y="6.2" width="4" height="1" fill="#888"/><rect x="8" y="9.2" width="4" height="1" fill="#888"/><rect x="0" y="6" width="6" height="7" fill="#2aa84a"/><path d="M1.2 9.3 L2.8 11 L5 7.5" stroke="#fff" stroke-width="1.1" fill="none"/></svg>
<svg style="position:absolute;left:477px;top:303px;" width="14" height="13" viewBox="0 0 14 13"><rect x="3.5" y="0.5" width="10" height="12" fill="#f4ecd8" stroke="#b89858" stroke-width="0.8"/><rect x="5.5" y="3" width="1.5" height="1.5" fill="#4a9a4a"/><rect x="5.5" y="6" width="1.5" height="1.5" fill="#4a9a4a"/><rect x="5.5" y="9" width="1.5" height="1.5" fill="#4a9a4a"/><rect x="8" y="3.2" width="4" height="1" fill="#888"/><rect x="8" y="6.2" width="4" height="1" fill="#888"/><rect x="8" y="9.2" width="4" height="1" fill="#888"/><rect x="0" y="6" width="6" height="7" fill="#2aa84a"/><path d="M1.2 9.3 L2.8 11 L5 7.5" stroke="#fff" stroke-width="1.1" fill="none"/></svg>
<svg style="position:absolute;left:465px;top:538px;" width="11" height="10" viewBox="0 0 11 10"><rect x="0" y="0" width="11" height="2" fill="#3a78c0"/><rect x="0" y="4" width="11" height="2" fill="#3a78c0"/><rect x="0" y="8" width="11" height="2" fill="#3a78c0"/></svg>
<div style="left:926px;top:533px;width:22px;height:22px;background:linear-gradient(#909090,#9e9e9e);border:1px solid #7a7a7a;border-radius:3px;box-shadow:inset 0 1px 1px rgba(0,0,0,.2);"></div>
<svg style="position:absolute;left:930px;top:537px;" width="14" height="14" viewBox="0 0 14 14"><path d="M0 2.5 L5 2.5 M3.5 0.8 L5.5 2.5 L3.5 4.2" stroke="#223a6a" stroke-width="0.9" fill="none"/><path d="M0 11 L5 11 M3.5 9.3 L5.5 11 L3.5 12.7" stroke="#223a6a" stroke-width="0.9" fill="none"/><rect x="6.5" y="1" width="1" height="12" fill="#223a6a"/><rect x="8.5" y="5" width="5" height="1.5" fill="#3a88d8"/><rect x="8.5" y="7.5" width="5" height="1.5" fill="#3a88d8"/></svg>
<svg style="position:absolute;left:953px;top:537px;" width="15" height="15" viewBox="0 0 15 15"><rect x="6.5" y="0.5" width="7" height="6" fill="#f4f8fc" stroke="#6a8ab8"/><rect x="6.5" y="0.5" width="7" height="1.8" fill="#6a8ab8"/><rect x="0.5" y="8.5" width="7" height="6" fill="#f4f8fc" stroke="#6a8ab8"/><rect x="0.5" y="8.5" width="7" height="1.8" fill="#6a8ab8"/><path d="M3 7 L3 3 L6 3" stroke="#888" fill="none"/></svg>
<div style="left:460px;top:721px;width:512px;height:12px;background:#b9b9b9;border-top:1px solid #c8c8c8;"></div>
<div style="left:461px;top:722px;width:473px;height:10px;background:linear-gradient(#8e8e8e,#a6a6a6 50%,#909090);border-radius:5px;"></div>
<svg style="position:absolute;left:620px;top:79px;" width="3" height="28" viewBox="0 0 3 28"><rect x="1" y="1.0" width="1.2" height="1.2" fill="#f4f0e6"/><rect x="0" y="0.0" width="1.3" height="1.3" fill="#958a76"/><rect x="1" y="7.6" width="1.2" height="1.2" fill="#f4f0e6"/><rect x="0" y="6.6" width="1.3" height="1.3" fill="#958a76"/><rect x="1" y="14.2" width="1.2" height="1.2" fill="#f4f0e6"/><rect x="0" y="13.2" width="1.3" height="1.3" fill="#958a76"/><rect x="1" y="20.8" width="1.2" height="1.2" fill="#f4f0e6"/><rect x="0" y="19.8" width="1.3" height="1.3" fill="#958a76"/></svg>
<svg style="position:absolute;left:636px;top:84px;" width="13" height="13" viewBox="0 0 13 13"><rect x="0.5" y="2.5" width="10" height="10" fill="#f4f4f4" stroke="#7a7a7a"/><rect x="1" y="3" width="9" height="2.5" fill="#5a9ad6"/><path d="M5.5 5.5 L5.5 12.5 M0.5 8.5 L10.5 8.5" stroke="#7a7a7a"/><path d="M10 0 L12.5 3 L10 6 L7.5 3Z" fill="#f8d040" stroke="#c89a20" stroke-width="0.5"/></svg>
<div style="left:663px;top:83px;width:1px;height:15px;background:#b0b0b0;"></div>
<div style="left:664px;top:83px;width:1px;height:15px;background:#ececec;"></div>
<svg style="position:absolute;left:674px;top:83px;" width="15" height="15" viewBox="0 0 15 15"><rect x="0.5" y="4.5" width="4" height="4" fill="#f0d060" stroke="#b08a20" stroke-width="0.6"/><rect x="5.5" y="10" width="5" height="4" fill="#f0d060" stroke="#b08a20" stroke-width="0.6"/><path d="M2.5 8.5 L2.5 12 L5.5 12" stroke="#8a7a5a" fill="none"/><circle cx="10.5" cy="4.5" r="4" fill="#c07a3a" stroke="#8a4a1a" stroke-width="0.6"/><path d="M8 3 Q10.5 5 13 3 M8 6 Q10.5 8 13 6" stroke="#f0c090" stroke-width="0.6" fill="none"/></svg>
<svg style="position:absolute;left:746px;top:83px;" width="13" height="15" viewBox="0 0 13 15"><rect x="1" y="1" width="6" height="6" fill="#d89a60" stroke="#a86a30" stroke-width="0.6"/><path d="M4 1 L4 7 M1 4 L7 4" stroke="#8a4a2a" stroke-width="0.6"/><path d="M10 0 L10 5 Q10 7 8 7" stroke="#3a6ac0" stroke-width="1.3" fill="none"/><circle cx="3.5" cy="9.5" r="3.2" fill="#3aa84a"/><circle cx="7" cy="11.5" r="3.2" fill="#6a4ab8"/></svg>
<svg style="position:absolute;left:798px;top:83px;" width="14" height="13" viewBox="0 0 14 13"><path d="M1 2 L4 5 M13 2 L10 5 M0 7 L3 7 M14 7 L11 7 M1 12 L4 9 M13 12 L10 9" stroke="#2a6a5a" stroke-width="1.2"/><ellipse cx="7" cy="7" rx="4" ry="4.5" fill="#6ac0a0" stroke="#2a7a5a"/><ellipse cx="7.5" cy="6" rx="2" ry="2" fill="#b8f0c0"/></svg>
<svg style="position:absolute;left:864px;top:83px;" width="14" height="16" viewBox="0 0 14 16"><path d="M1 3 L6 3 M3 1 L1 3 L3 5" stroke="#3a6ac0" stroke-width="1" fill="none"/><path d="M1 7 L6 7 M4 5 L6 7 L4 9" stroke="#3a6ac0" stroke-width="1" fill="none"/><rect x="0.5" y="9.5" width="7" height="6" fill="#fff" stroke="#3a5a90"/><rect x="0.5" y="9.5" width="7" height="2" fill="#3a5a90"/><rect x="8.5" y="0.5" width="5" height="9" rx="2" fill="#f0c838" stroke="#b08a10" stroke-width="0.8"/></svg>
<svg style="position:absolute;left:22px;top:127px;" width="10" height="12" viewBox="0 0 10 12"><path d="M0.5 0.5 L6.5 0.5 L9.5 3.5 L9.5 11.5 L0.5 11.5Z" fill="#e8eef8" stroke="#b89a5a" stroke-width="0.8"/><rect x="2" y="4" width="6" height="1" fill="#7a8ab0"/><rect x="2" y="6" width="6" height="1" fill="#7a8ab0"/><rect x="2" y="8" width="6" height="1" fill="#7a8ab0"/></svg>
<svg style="position:absolute;left:311px;top:127px;" width="10" height="12" viewBox="0 0 10 12"><path d="M0.5 0.5 L6.5 0.5 L9.5 3.5 L9.5 11.5 L0.5 11.5Z" fill="#f4f8fc" stroke="#b89a5a" stroke-width="0.8"/><path d="M6 3 L6 8 Q6 10 3.5 9.5" stroke="#3a6ac0" stroke-width="1.5" fill="none"/></svg>
<svg style="position:absolute;left:986px;top:114px;" width="16" height="3" viewBox="0 0 16 3"><rect x="0" y="0" width="2" height="2" fill="#c0b8a8"/><rect x="4" y="0" width="2" height="2" fill="#c0b8a8"/><rect x="8" y="0" width="2" height="2" fill="#c0b8a8"/><rect x="12" y="0" width="2" height="2" fill="#c0b8a8"/></svg>
<svg style="position:absolute;left:989px;top:125px;" width="9" height="8" viewBox="0 0 9 8"><rect x="2.5" y="0.5" width="6" height="4.5" rx="0.5" fill="#fff" stroke="#5a5a5a" stroke-width="0.9"/><rect x="2.5" y="0.5" width="6" height="1.3" fill="#5a5a5a"/><rect x="0.5" y="3" width="6" height="4.5" rx="0.5" fill="#fff" stroke="#5a5a5a" stroke-width="0.9"/><rect x="0.5" y="3" width="6" height="1.3" fill="#5a5a5a"/></svg>
<svg style="position:absolute;left:988px;top:144px;" width="10" height="11" viewBox="0 0 10 11"><rect x="0" y="0" width="1.3" height="11" fill="#8a98aa"/><rect x="1" y="2" width="3" height="1" fill="#8a98aa"/><rect x="1" y="8" width="3" height="1" fill="#8a98aa"/><rect x="4" y="0.5" width="5.5" height="4.5" fill="#d08a40" stroke="#a86020" stroke-width="0.6"/><rect x="4" y="6" width="5.5" height="4.5" fill="#d08a40" stroke="#a86020" stroke-width="0.6"/><path d="M4 2.7 L9.5 2.7 M4 8.2 L9.5 8.2" stroke="#f8d0a0" stroke-width="0.7"/></svg>
<div style="left:982px;top:163px;width:24px;height:24px;background:linear-gradient(#909090,#9e9e9e);border:1px solid #7a7a7a;border-radius:3px;box-shadow:inset 0 1px 1px rgba(0,0,0,.2);"></div>
<svg style="position:absolute;left:987px;top:168px;" width="14" height="13" viewBox="0 0 14 13"><rect x="0.5" y="5.5" width="6" height="6.5" fill="#2aa84a" stroke="#1a8a3a" stroke-width="0.6"/><path d="M1.8 8.5 L3.2 10.3 L6 6.5" stroke="#fff" stroke-width="1.2" fill="none"/><path d="M4 1.5 L8 1.5 M6.5 1.5 L6.5 9 Q6.5 10.5 5 10.5" stroke="#2a9a4a" stroke-width="1.3" fill="none"/><path d="M9 3.5 L9 8 Q9 10.5 11 10.5 Q13 10.5 13 8 L13 3.5 M8.3 3.5 L10 3.5 M12.2 3.5 L13.8 3.5" stroke="#d83a4a" stroke-width="1.1" fill="none"/></svg>
<svg style="position:absolute;left:986px;top:196px;" width="16" height="3" viewBox="0 0 16 3"><rect x="0" y="0" width="2" height="2" fill="#c0b8a8"/><rect x="4" y="0" width="2" height="2" fill="#c0b8a8"/><rect x="8" y="0" width="2" height="2" fill="#c0b8a8"/><rect x="12" y="0" width="2" height="2" fill="#c0b8a8"/></svg>
<svg style="position:absolute;left:989px;top:206px;" width="9" height="8" viewBox="0 0 9 8"><rect x="2.5" y="0.5" width="6" height="4.5" rx="0.5" fill="#fff" stroke="#5a5a5a" stroke-width="0.9"/><rect x="2.5" y="0.5" width="6" height="1.3" fill="#5a5a5a"/><rect x="0.5" y="3" width="6" height="4.5" rx="0.5" fill="#fff" stroke="#5a5a5a" stroke-width="0.9"/><rect x="0.5" y="3" width="6" height="1.3" fill="#5a5a5a"/></svg>
<svg style="position:absolute;left:988px;top:227px;" width="11" height="14" viewBox="0 0 11 14"><path d="M0.5 0.5 L10.5 0.5 L10.5 13.5 Q8 11.5 5.5 13.5 L0.5 13.5Z" fill="#dde0f4" stroke="#7a80a8"/><rect x="2" y="3" width="7" height="1" fill="#7a80a8"/><rect x="2" y="5" width="7" height="1" fill="#7a80a8"/><rect x="2" y="7" width="7" height="1" fill="#7a80a8"/><rect x="2" y="9" width="7" height="1" fill="#7a80a8"/></svg>
<svg style="position:absolute;left:986px;top:255px;" width="16" height="3" viewBox="0 0 16 3"><rect x="0" y="0" width="2" height="2" fill="#c0b8a8"/><rect x="4" y="0" width="2" height="2" fill="#c0b8a8"/><rect x="8" y="0" width="2" height="2" fill="#c0b8a8"/><rect x="12" y="0" width="2" height="2" fill="#c0b8a8"/></svg>
<svg style="position:absolute;left:989px;top:265px;" width="9" height="8" viewBox="0 0 9 8"><rect x="2.5" y="0.5" width="6" height="4.5" rx="0.5" fill="#fff" stroke="#5a5a5a" stroke-width="0.9"/><rect x="2.5" y="0.5" width="6" height="1.3" fill="#5a5a5a"/><rect x="0.5" y="3" width="6" height="4.5" rx="0.5" fill="#fff" stroke="#5a5a5a" stroke-width="0.9"/><rect x="0.5" y="3" width="6" height="1.3" fill="#5a5a5a"/></svg>
<svg style="position:absolute;left:986px;top:287px;" width="14" height="14" viewBox="0 0 14 14"><rect x="0.5" y="0.5" width="5" height="4" fill="#fff" stroke="#2a6ac0"/><rect x="0.5" y="8.5" width="5" height="4" fill="#fff" stroke="#2a6ac0"/><rect x="7" y="2" width="6" height="1" fill="#2a6ac0"/><rect x="7" y="10" width="6" height="1" fill="#2a6ac0"/><rect x="7.5" y="5.5" width="3" height="2" fill="#2a6ac0"/><path d="M3 4.5 L3 8.5" stroke="#2a6ac0"/></svg>
<svg style="position:absolute;left:986px;top:309px;" width="14" height="13" viewBox="0 0 14 13"><rect x="0.5" y="0.5" width="13" height="12" fill="#eef2f8" stroke="#4a6a98"/><rect x="0.5" y="0.5" width="13" height="3" fill="#4a6a98"/><path d="M4.5 3.5 L4.5 12.5 M0.5 7.5 L13.5 7.5" stroke="#7a90b0" stroke-width="0.8"/></svg>
<svg style="position:absolute;left:986px;top:332px;" width="14" height="13" viewBox="0 0 14 13"><path d="M1 2 L4 5 M13 2 L10 5 M0 7 L3 7 M14 7 L11 7 M1 12 L4 9 M13 12 L10 9" stroke="#2a6a5a" stroke-width="1.2"/><ellipse cx="7" cy="7" rx="4" ry="4.5" fill="#6ac0a0" stroke="#2a7a5a"/><ellipse cx="7.5" cy="6" rx="2" ry="2" fill="#b8f0c0"/></svg>
<svg style="position:absolute;left:986px;top:354px;" width="15" height="14" viewBox="0 0 15 14"><path d="M3 13 L3 5 M0.5 7.5 L3 4.5 L5.5 7.5 M3 9 L6 12" stroke="#2a5ab0" stroke-width="1.8" fill="none"/><path d="M10 11 L10 2 M7.5 4.5 L10 1.5 L12.5 4.5 M10 6 L13 9" stroke="#2a5ab0" stroke-width="1.8" fill="none"/></svg>
<svg style="position:absolute;left:987px;top:376px;" width="13" height="15" viewBox="0 0 13 15"><rect x="4.5" y="0.5" width="8" height="10" rx="1.5" fill="#f0c030" stroke="#b08a10" stroke-width="0.8"/><rect x="0.5" y="4.5" width="8" height="10" fill="#eef2f8" stroke="#5a6a98"/><rect x="2" y="7" width="5" height="1" fill="#5a6a98"/><rect x="2" y="9" width="5" height="1" fill="#5a6a98"/><rect x="2" y="11" width="5" height="1" fill="#5a6a98"/></svg>
<svg style="position:absolute;left:15px;top:747px;" width="3" height="20" viewBox="0 0 3 20"><rect x="1" y="1.0" width="1.2" height="1.2" fill="#f4f0e6"/><rect x="0" y="0.0" width="1.3" height="1.3" fill="#958a76"/><rect x="1" y="5.5" width="1.2" height="1.2" fill="#f4f0e6"/><rect x="0" y="4.5" width="1.3" height="1.3" fill="#958a76"/><rect x="1" y="10.0" width="1.2" height="1.2" fill="#f4f0e6"/><rect x="0" y="9.0" width="1.3" height="1.3" fill="#958a76"/><rect x="1" y="14.5" width="1.2" height="1.2" fill="#f4f0e6"/><rect x="0" y="13.5" width="1.3" height="1.3" fill="#958a76"/></svg>
<svg style="position:absolute;left:27px;top:753px;" width="9" height="8" viewBox="0 0 9 8"><rect x="2.5" y="0.5" width="6" height="4.5" rx="0.5" fill="#fff" stroke="#5a5a5a" stroke-width="0.9"/><rect x="2.5" y="0.5" width="6" height="1.3" fill="#5a5a5a"/><rect x="0.5" y="3" width="6" height="4.5" rx="0.5" fill="#fff" stroke="#5a5a5a" stroke-width="0.9"/><rect x="0.5" y="3" width="6" height="1.3" fill="#5a5a5a"/></svg>
<svg style="position:absolute;left:45px;top:749px;" width="13" height="16" viewBox="0 0 13 16"><rect x="0.5" y="0.5" width="9" height="15" fill="#eef2f8" stroke="#7a8ab0"/><circle cx="5" cy="5" r="2.8" fill="#e02020"/><path d="M2 13 Q2 9 5 9 Q8 9 8 13Z" fill="#f0b020"/><path d="M9.5 0.5 Q12.5 1 11.5 4 L11.5 15.5 L9.5 15.5" fill="#dde8f4" stroke="#7a8ab0"/></svg>
<svg style="position:absolute;left:70px;top:751px;" width="12" height="12" viewBox="0 0 12 12"><circle cx="6" cy="6" r="5.4" fill="#e8f0fa"/><text x="6" y="9.5" font-family="Liberation Sans" font-weight="bold" font-size="10" text-anchor="middle" fill="#2a6ac0">@</text></svg>
<svg style="position:absolute;left:92px;top:748px;" width="15" height="16" viewBox="0 0 15 16"><path d="M0.5 0.5 L8 0.5 L11.5 4 L11.5 14.5 L0.5 14.5Z" fill="#f4f0e0" stroke="#b89a5a" stroke-width="0.8"/><text x="5.5" y="10" font-family="Liberation Mono" font-size="7" text-anchor="middle" fill="#3a6ac0">{}</text><path d="M7 12 L11 12 L11 10 L14.5 13 L11 16 L11 14 L7 14Z" fill="#f0c050" stroke="#c09030" stroke-width="0.5"/></svg>
<svg style="position:absolute;left:115px;top:749px;" width="15" height="15" viewBox="0 0 15 15"><path d="M14 1 Q13 0 12 1 L3 10 L5 12 L14 3Z" fill="#f0c040" stroke="#b08020" stroke-width="0.6"/><circle cx="5" cy="10" r="2.8" fill="#a0a0a0"/><path d="M1 14 L3 11" stroke="#fff" stroke-width="2"/></svg>
<svg style="position:absolute;left:138px;top:749px;" width="14" height="14" viewBox="0 0 14 14"><rect x="0.5" y="0.5" width="13" height="10" rx="1" fill="#2a5ab0" stroke="#1a4a98"/><rect x="2" y="2" width="10" height="7" fill="#e8f0fa"/><rect x="3" y="3.5" width="5" height="1" fill="#2a5098"/><rect x="3" y="5.5" width="6" height="1" fill="#2a5098"/><rect x="3" y="11" width="8" height="2" fill="#1a4a98"/></svg>
<svg style="position:absolute;left:161px;top:749px;" width="15" height="15" viewBox="0 0 15 15"><rect x="0.5" y="2.5" width="12" height="7" fill="#dde8d8" stroke="#7a9a7a"/><rect x="0.5" y="2.5" width="12" height="2.5" fill="#4aa84a"/><circle cx="11" cy="11" r="3.8" fill="#2a9a3a"/><path d="M9.8 9 L12.8 11 L9.8 13Z" fill="#fff"/></svg>
<svg style="position:absolute;left:725px;top:748px;" width="3" height="20" viewBox="0 0 3 20"><rect x="1" y="1.0" width="1.2" height="1.2" fill="#f4f0e6"/><rect x="0" y="0.0" width="1.3" height="1.3" fill="#958a76"/><rect x="1" y="5.5" width="1.2" height="1.2" fill="#f4f0e6"/><rect x="0" y="4.5" width="1.3" height="1.3" fill="#958a76"/><rect x="1" y="10.0" width="1.2" height="1.2" fill="#f4f0e6"/><rect x="0" y="9.0" width="1.3" height="1.3" fill="#958a76"/><rect x="1" y="14.5" width="1.2" height="1.2" fill="#f4f0e6"/><rect x="0" y="13.5" width="1.3" height="1.3" fill="#958a76"/></svg>
<div style="left:956px;top:752px;width:24px;height:11px;background:#a8a8a8;border:1px solid #9a9a9a;"></div>
<div style="left:961px;top:752px;width:3px;height:11px;background:#8aa0b8;"></div>
<svg style="position:absolute;left:986px;top:751px;" width="14" height="12" viewBox="0 0 14 12"><rect x="0.5" y="0.5" width="9" height="7" fill="#e8f0e8" stroke="#8a9a7a"/><rect x="2.5" y="2.5" width="9" height="7" fill="#e8f0e8" stroke="#8a9a7a"/><rect x="4.5" y="4.5" width="9" height="7" fill="#5ab85a" stroke="#4a7aa8"/><rect x="11" y="5" width="2" height="6" fill="#f4f8fc"/></svg>
<svg style="position:absolute;left:819px;top:128px;" width="14" height="19" viewBox="0 0 14 19"><path d="M1 1 L1 14.5 L4.2 11.5 L6.8 17 L9 16 L6.6 10.6 L10.8 10.6 Z" fill="#fff" stroke="#111" stroke-width="1" stroke-linejoin="round"/></svg>
<div class="t" id="t36" style="left:63px;top:365.22px;font-family:'Liberation Sans', sans-serif;font-size:62px;line-height:62px;color:;font-weight:bold;font-style:normal;color:rgba(184,184,184,0.48);letter-spacing:-3.33px;">2016</div>
<div class="t" id="t37" style="left:201px;top:365.22px;font-family:'Liberation Sans', sans-serif;font-size:62px;line-height:62px;color:;font-weight:bold;font-style:normal;color:rgba(184,184,184,0.48);letter-spacing:-1.50px;">Micha</div>
<div class="t" id="t38" style="left:388px;top:365.22px;font-family:'Liberation Sans', sans-serif;font-size:62px;line-height:62px;color:;font-weight:bold;font-style:normal;color:rgba(184,184,184,0.48);letter-spacing:-2.33px;">Kops</div>
<div class="t" id="t39" style="left:542.5px;top:365.22px;font-family:'Liberation Sans', sans-serif;font-size:62px;line-height:62px;color:;font-weight:bold;font-style:normal;color:rgba(184,184,184,0.48);transform:scaleX(1.42);transform-origin:0 0;letter-spacing:0.00px;">/</div>
<div class="t" id="t40" style="left:582px;top:365.22px;font-family:'Liberation Sans', sans-serif;font-size:62px;line-height:62px;color:;font-weight:bold;font-style:normal;color:rgba(184,184,184,0.48);letter-spacing:-2.50px;">hasCode.com</div>
</body></html>
